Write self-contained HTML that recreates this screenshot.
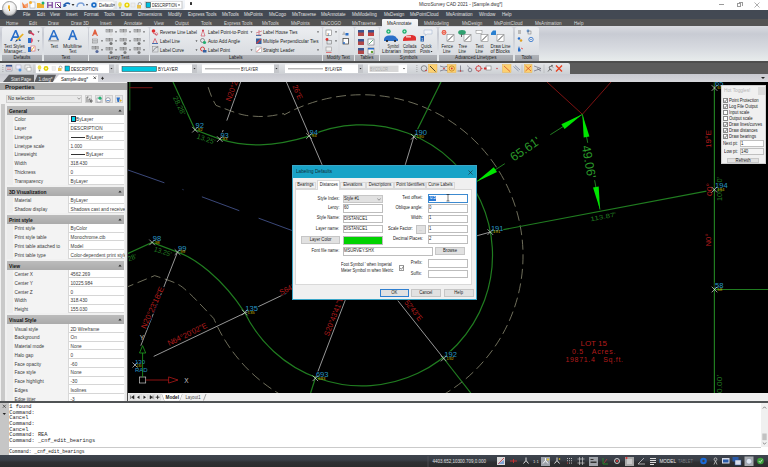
<!DOCTYPE html>
<html><head><meta charset="utf-8">
<style>
*{margin:0;padding:0;box-sizing:border-box}
html,body{width:768px;height:467px;overflow:hidden;background:#fff;font-family:"Liberation Sans",sans-serif;position:relative}
.a{position:absolute}
.t{position:absolute;white-space:nowrap;line-height:1}
#title{left:0;top:0;width:768px;height:10px;background:#fff}
#menu{left:0;top:10px;width:768px;height:8.5px;background:#434953}
#rtabs{left:0;top:18.5px;width:768px;height:7.5px;background:#545454}
#ribbon{left:0;top:26px;width:768px;height:36px;background:linear-gradient(#d9dbe1 0%,#c8cbd3 22%,#d6d9df 60%,#e9eded 100%)}
#dl1{left:0;top:61px;width:768px;height:2px;background:#4e4e4e}
#tb{left:0;top:63px;width:768px;height:11px;background:#5c5c5c}
#tbl{left:0;top:63px;width:570px;height:11px;background:linear-gradient(#e4e6e9,#cdd0d4);border-radius:0 2px 0 0}
#tabs{left:0;top:74px;width:768px;height:8px;background:linear-gradient(#c8c9d0,#d6d7dc)}
#props{left:0;top:82px;width:127px;height:319px;background:#f0f0f0}
#draw{left:128px;top:82px;width:640px;height:311px;background:#000}
#lay{left:128px;top:393px;width:640px;height:8px;background:#f0f0f0}
#dl2{left:0;top:401px;width:768px;height:2px;background:#505355}
#cmd{left:0;top:403px;width:768px;height:52px;background:#fff}
#status{left:0;top:455px;width:768px;height:12px;background:#34373c}
.mn{color:#e0e0e0;font-size:4.6px;top:13px}
.rt{color:#d8d8d8;font-size:4.6px;top:22px}
.grp{position:absolute;top:27px;height:34px;background:linear-gradient(#eceef1,#dcdfe3 70%,#d6d9de);border-radius:2px}
.gl{position:absolute;top:54.5px;height:6.5px;background:linear-gradient(#b0b3b8,#a2a5aa);font-size:4.6px;color:#222;text-align:center;line-height:6.5px}
.rl{font-size:4.6px;color:#222}

</style></head><body>
<div class="a" id="title"></div>
<div class="a" id="menu"></div>
<div class="a" id="rtabs"></div>
<div class="a" id="ribbon"></div>
<div class="a" id="dl1"></div>
<div class="a" id="tb"></div>
<div class="a" id="tbl"></div>
<div class="a" id="tabs"></div>
<div class="a" id="props"></div>
<div class="a" id="draw"></div>
<div class="a" id="lay"></div>
<div class="a" id="dl2"></div>
<div class="a" id="cmd"></div>
<div class="a" id="status"></div>
<div class="a" style="left:20px;top:0;width:165px;height:10px;background:linear-gradient(#f4f7fb,#e6ecf3);border-radius:0 0 4px 0"></div>
<div class="a" style="left:1.6px;top:0.6px;width:15px;height:15px;border-radius:50%;background:radial-gradient(circle at 50% 30%,#ffffff 0%,#f2f2f2 40%,#d0d0d0 75%,#b0b0b0 100%);border:0.8px solid #9c9c9c;z-index:3"></div>
<div class="a" style="left:8px;top:5px;width:2.4px;height:4px;background:#f0b020;border-radius:50% 50% 35% 35%;z-index:4"></div>
<div class="a" style="left:8.7px;top:9px;width:1px;height:1.6px;background:#c08010;z-index:4"></div>
<svg class="a" style="left:20px;top:0" width="170" height="10" viewBox="0 0 170 10">
 <path d="M2 2 L7 8 L3 8 Z" fill="#f08040"/><path d="M4 5 L8 3 L8 8Z" fill="#f8a070"/>
 <rect x="10" y="2" width="5" height="6" fill="#fff" stroke="#999" stroke-width=".5"/><circle cx="10.5" cy="2.5" r="1.5" fill="#f8b030"/>
 <path d="M17 3 L20 3 L21 4 L24 4 L24 8 L17 8Z" fill="#f0b030"/><circle cx="23" cy="3" r="1.5" fill="#20b070"/>
 <rect x="27" y="2" width="6" height="6" fill="#8a5aa8"/><rect x="28.5" y="2.5" width="3" height="2" fill="#fff"/><rect x="28.5" y="6" width="3" height="2" fill="#ddd"/>
 <rect x="35" y="2" width="6" height="6" fill="#a070b8"/><rect x="36" y="3" width="4" height="4" fill="#fff"/><path d="M37 4 L41 8" stroke="#333" stroke-width="1"/>
 <path d="M44 7 Q44 3 48 3 L50 4" stroke="#1f5fb0" stroke-width="1.6" fill="none"/><path d="M43 4 L45 7 L47 5Z" fill="#1f5fb0"/>
 <path d="M52 3.5 L54 5 L52 6.5Z" fill="#333" transform="rotate(90 53 5)"/>
 <path d="M57 7 Q57 3 61 3 Q64 3 64 6" stroke="#7aa0d8" stroke-width="1.4" fill="none"/>
 <path d="M66 4 L68 4 L67 6Z" fill="#333"/>
 <circle cx="74" cy="5" r="2.8" fill="#1f6fc8"/><circle cx="74" cy="5" r="1" fill="#fff"/>
 <rect x="77" y="1" width="17" height="8" fill="#fff" stroke="#ccc" stroke-width=".5"/>
 <text x="79" y="7" font-size="4.6" font-family="Liberation Sans" fill="#222" textLength="14" lengthAdjust="spacingAndGlyphs">Default</text>
 <path d="M93 4.5 L95 4.5 L94 6Z" fill="#222"/>
 <line x1="96" y1="1" x2="96" y2="9" stroke="#bbb" stroke-width=".5"/>
 <ellipse cx="100" cy="4.5" rx="1.8" ry="2.5" fill="#f0e060"/><rect x="99.3" y="7" width="1.4" height="1.5" fill="#999"/>
 <circle cx="107" cy="5" r="2.6" fill="#e8d000"/><circle cx="107" cy="5" r="1.2" fill="#fff8a0"/>
 <rect x="111" y="3" width="4" height="4" fill="#eee" stroke="#ccc" stroke-width=".4"/>
 <rect x="117" y="5" width="4" height="3.5" fill="#e8c050"/><path d="M118 5 Q118 2 120 2.5 Q122 3 121.5 5" stroke="#888" stroke-width=".7" fill="none"/>
 <rect x="125" y="1.5" width="37" height="7" fill="#fff" stroke="#c8c8c8" stroke-width=".5"/>
 <rect x="126" y="2.5" width="4.5" height="5" fill="#00c0e0" stroke="#222" stroke-width=".5"/>
 <text x="132" y="7" font-size="4.6" font-family="Liberation Sans" fill="#222" textLength="25" lengthAdjust="spacingAndGlyphs">DESCRIPTION</text>
 <path d="M158 4.5 L160 4.5 L159 6Z" fill="#222"/>
 <line x1="162" y1="1" x2="162" y2="9" stroke="#bbb" stroke-width=".5"/>
</svg>
<div class="a" style="left:189.5px;top:2.2px;width:2px;height:3px;background:#333;border-radius:0.5px"></div>
<div class="t" style="left:419px;top:2.5px;font-size:4.7px;color:#333">MicroSurvey CAD 2021 - [Sample.dwg*]</div>
<div class="a" style="left:719px;top:4px;width:5px;height:1px;background:#9a9a9a"></div>
<div class="a" style="left:737px;top:2.5px;width:4px;height:4px;border:0.8px solid #9a9a9a;background:#fff"></div>
<div class="a" style="left:738.5px;top:1.5px;width:4px;height:4px;border-top:0.8px solid #9a9a9a;border-right:0.8px solid #9a9a9a"></div>
<svg class="a" style="left:754px;top:1.5px" width="6" height="6"><path d="M.5 .5 L5.5 5.5 M5.5 .5 L.5 5.5" stroke="#9a9a9a" stroke-width=".8"/></svg>
<div class="t mn" style="left:23px">File</div>
<div class="t mn" style="left:37px">Edit</div>
<div class="t mn" style="left:50px">View</div>
<div class="t mn" style="left:66px">Insert</div>
<div class="t mn" style="left:84px">Format</div>
<div class="t mn" style="left:104px">Tools</div>
<div class="t mn" style="left:121px">Draw</div>
<div class="t mn" style="left:138px">Dimensions</div>
<div class="t mn" style="left:168px">Modify</div>
<div class="t mn" style="left:188px">Express Tools</div>
<div class="t mn" style="left:222px">MsTools</div>
<div class="t mn" style="left:244px">MsPoints</div>
<div class="t mn" style="left:269px">MsCogo</div>
<div class="t mn" style="left:292px">MsTraverse</div>
<div class="t mn" style="left:321px">MsAnnotate</div>
<div class="t mn" style="left:352px">MsModeling</div>
<div class="t mn" style="left:384px">MsDesign</div>
<div class="t mn" style="left:410px">MsPointCloud</div>
<div class="t mn" style="left:446px">MsAnimation</div>
<div class="t mn" style="left:479px">Window</div>
<div class="t mn" style="left:502px">Help</div>
<div class="a" style="left:382px;top:19px;width:36px;height:8px;background:linear-gradient(#f6f7f8,#eceef0);border-radius:1px 1px 0 0"></div>
<div class="t rt" style="left:387px;color:#222">MsAnnotate</div>
<div class="t rt" style="left:6px">Home</div>
<div class="t rt" style="left:29px">Edit</div>
<div class="t rt" style="left:48px">Draw</div>
<div class="t rt" style="left:71px">Draw 3D</div>
<div class="t rt" style="left:100px">Insert</div>
<div class="t rt" style="left:124px">Annotate</div>
<div class="t rt" style="left:154px">View</div>
<div class="t rt" style="left:175px">Output</div>
<div class="t rt" style="left:201px">Tools</div>
<div class="t rt" style="left:224px">Express Tools</div>
<div class="t rt" style="left:262px">MsTools</div>
<div class="t rt" style="left:291px">MsPoints</div>
<div class="t rt" style="left:321px">MsCOGO</div>
<div class="t rt" style="left:352px">MsTraverse</div>
<div class="t rt" style="left:424px">MsModeling</div>
<div class="t rt" style="left:462px">MsDesign</div>
<div class="t rt" style="left:494px">MsPointCloud</div>
<div class="t rt" style="left:535px">MsAnimation</div>
<div class="t rt" style="left:574px">Help</div>
<div class="grp" style="left:2px;width:40px"></div>
<div class="gl" style="left:2px;width:40px">Defaults</div>
<div class="grp" style="left:44px;width:43.5px"></div>
<div class="gl" style="left:44px;width:43.5px">Text</div>
<div class="grp" style="left:89px;width:59.5px"></div>
<div class="gl" style="left:89px;width:59.5px">Leroy Text</div>
<div class="grp" style="left:150px;width:171.5px"></div>
<div class="gl" style="left:150px;width:171.5px">Labels</div>
<div class="grp" style="left:323px;width:30.5px"></div>
<div class="gl" style="left:323px;width:30.5px">Modify Text</div>
<div class="grp" style="left:355px;width:23.600000000000023px"></div>
<div class="gl" style="left:355px;width:23.600000000000023px">Tables</div>
<div class="grp" style="left:380px;width:57.30000000000001px"></div>
<div class="gl" style="left:380px;width:57.30000000000001px">Symbols</div>
<div class="grp" style="left:438.5px;width:74.5px"></div>
<div class="gl" style="left:438.5px;width:74.5px">Advanced Linetypes</div>
<div class="grp" style="left:515px;width:23.5px"></div>
<div class="gl" style="left:515px;width:23.5px">Tools</div>
<svg class="a" style="left:0;top:26px" width="540" height="36" viewBox="0 26 540 36" font-family="Liberation Sans" font-size="4.6" fill="#222">
<path d="M10 41 L15 30 L16.5 30 L21 41 L19 41 L17.8 38 L13.2 38 L12 41Z M13.8 36.3 L17.2 36.3 L15.6 32.3Z" fill="#2a6fc9"/>
<path d="M16.5 39.5 L22.5 33.5 L23.8 34.6 L17.8 40.6Z" fill="#e8b020"/><path d="M16.5 39.5 L17.8 40.6 L15 42.3Z" fill="#1f3f78"/>
<text x="4" y="48" textLength="21" lengthAdjust="spacingAndGlyphs">Text Styles</text>
<text x="4" y="53" textLength="22" lengthAdjust="spacingAndGlyphs">Manager...</text>
<circle cx="30" cy="32" r="2" fill="#666"/><path d="M30 32 L34 35" stroke="#d04060" stroke-width="1.6"/>
<rect x="28" y="38" width="3" height="5" fill="#2a6fc9"/><path d="M31 37.5 Q35 40 31 43.5Z" fill="#e05070"/>
<rect x="28" y="47" width="3" height="5" fill="#2a6fc9"/><rect x="31" y="46" width="4" height="5" fill="#fff" stroke="#d04040" stroke-width=".5"/><path d="M31 51 L34 47" stroke="#e0a020" stroke-width=".8"/>
<path d="M37.5 31.4 L39.5 31.4 L38.5 32.8Z" fill="#222"/>
<path d="M37.5 40.4 L39.5 40.4 L38.5 41.8Z" fill="#222"/>
<path d="M37.5 49.4 L39.5 49.4 L38.5 50.8Z" fill="#222"/>
<path d="M48.5 40 L53 30 L54.5 30 L59 40 L57 40 L56 37.3 L51.5 37.3 L50.5 40Z M52.2 35.6 L55.3 35.6 L53.8 31.8Z" fill="#2a6fc9"/><rect x="48" y="40.6" width="11" height=".6" fill="#555"/>
<path d="M68 40 L72 30 L73.5 30 L77.5 40 L75.5 40 L74.6 37.3 L70.9 37.3 L70 40Z M71.5 35.6 L74 35.6 L72.8 31.8Z" fill="#2a6fc9"/>
<text x="50.5" y="48" textLength="7.5" lengthAdjust="spacingAndGlyphs">Text</text>
<text x="63" y="48" textLength="19" lengthAdjust="spacingAndGlyphs">Multiline</text>
<text x="69" y="53" textLength="7.5" lengthAdjust="spacingAndGlyphs">Text</text>
<path d="M92 36 L94.5 29.5 L95.5 29.5 L98 36 L96.8 36 L96.2 34.5 L93.8 34.5 L93.2 36Z" fill="#e06040"/>
<g fill="none" stroke="#777" stroke-width=".5"><rect x="92.5" y="39" width="5" height="4"/></g><path d="M93 40.5h4M93 41.8h4" stroke="#777" stroke-width=".4"/>
<g fill="none" stroke="#777" stroke-width=".5"><rect x="92" y="46.5" width="3.5" height="2.5"/><rect x="95.5" y="46.5" width="3" height="2.5"/></g><path d="M92.5 47.3 h2.5 M92.5 48.1 h2.5 M96 47.3 h2 M96 48.1 h2" stroke="#666" stroke-width=".4"/><circle cx="97" cy="51.5" r="1.6" fill="#334a8a" opacity=".8"/>
<g fill="none" stroke="#777" stroke-width=".5"><rect x="106" y="29.5" width="3.5" height="2.5"/><rect x="109.5" y="29.5" width="3" height="2.5"/></g><path d="M106.5 30.3 h2.5 M106.5 31.1 h2.5 M110 30.3 h2 M110 31.1 h2" stroke="#666" stroke-width=".4"/><circle cx="111" cy="34.5" r="1.6" fill="#ddd" opacity=".8"/>
<g fill="none" stroke="#777" stroke-width=".5"><rect x="106" y="38.5" width="3.5" height="2.5"/><rect x="109.5" y="38.5" width="3" height="2.5"/></g><path d="M106.5 39.3 h2.5 M106.5 40.1 h2.5 M110 39.3 h2 M110 40.1 h2" stroke="#666" stroke-width=".4"/><circle cx="111" cy="43.5" r="1.6" fill="#555" opacity=".8"/>
<g fill="none" stroke="#777" stroke-width=".5"><rect x="106" y="47.5" width="3.5" height="2.5"/><rect x="109.5" y="47.5" width="3" height="2.5"/></g><path d="M106.5 48.3 h2.5 M106.5 49.1 h2.5 M110 48.3 h2 M110 49.1 h2" stroke="#666" stroke-width=".4"/><circle cx="111" cy="52.5" r="1.6" fill="#666" opacity=".8"/>
<g fill="none" stroke="#777" stroke-width=".5"><rect x="120" y="29.5" width="3.5" height="2.5"/><rect x="123.5" y="29.5" width="3" height="2.5"/></g><path d="M120.5 30.3 h2.5 M120.5 31.1 h2.5 M124 30.3 h2 M124 31.1 h2" stroke="#666" stroke-width=".4"/><circle cx="125" cy="34.5" r="1.6" fill="#ddd" opacity=".8"/>
<g fill="none" stroke="#777" stroke-width=".5"><rect x="120" y="38.5" width="3.5" height="2.5"/><rect x="123.5" y="38.5" width="3" height="2.5"/></g><path d="M120.5 39.3 h2.5 M120.5 40.1 h2.5 M124 39.3 h2 M124 40.1 h2" stroke="#666" stroke-width=".4"/><circle cx="125" cy="43.5" r="1.6" fill="#555" opacity=".8"/>
<g fill="none" stroke="#777" stroke-width=".5"><rect x="120" y="47.5" width="3.5" height="2.5"/><rect x="123.5" y="47.5" width="3" height="2.5"/></g><path d="M120.5 48.3 h2.5 M120.5 49.1 h2.5 M124 48.3 h2 M124 49.1 h2" stroke="#666" stroke-width=".4"/><circle cx="125" cy="52.5" r="1.6" fill="#666" opacity=".8"/>
<g fill="none" stroke="#777" stroke-width=".5"><rect x="134" y="29.5" width="3.5" height="2.5"/><rect x="137.5" y="29.5" width="3" height="2.5"/></g><path d="M134.5 30.3 h2.5 M134.5 31.1 h2.5 M138 30.3 h2 M138 31.1 h2" stroke="#666" stroke-width=".4"/><circle cx="139" cy="34.5" r="1.6" fill="#ddd" opacity=".8"/>
<g fill="none" stroke="#777" stroke-width=".5"><rect x="134" y="38.5" width="3.5" height="2.5"/><rect x="137.5" y="38.5" width="3" height="2.5"/></g><path d="M134.5 39.3 h2.5 M134.5 40.1 h2.5 M138 39.3 h2 M138 40.1 h2" stroke="#666" stroke-width=".4"/><circle cx="139" cy="43.5" r="1.6" fill="#555" opacity=".8"/>
<g fill="none" stroke="#777" stroke-width=".5"><rect x="134" y="47.5" width="3.5" height="2.5"/><rect x="137.5" y="47.5" width="3" height="2.5"/></g><path d="M134.5 48.3 h2.5 M134.5 49.1 h2.5 M138 48.3 h2 M138 49.1 h2" stroke="#666" stroke-width=".4"/><circle cx="139" cy="52.5" r="1.6" fill="#666" opacity=".8"/>
<path d="M115 31.4 L117 31.4 L116 32.8Z" fill="#222"/>
<path d="M115 40.4 L117 40.4 L116 41.8Z" fill="#222"/>
<path d="M115 49.4 L117 49.4 L116 50.8Z" fill="#222"/>
<path d="M129 31.4 L131 31.4 L130 32.8Z" fill="#222"/>
<path d="M129 40.4 L131 40.4 L130 41.8Z" fill="#222"/>
<path d="M129 49.4 L131 49.4 L130 50.8Z" fill="#222"/>
<path d="M143 31.4 L145 31.4 L144 32.8Z" fill="#222"/>
<path d="M143 40.4 L145 40.4 L144 41.8Z" fill="#222"/>
<path d="M143 49.4 L145 49.4 L144 50.8Z" fill="#222"/>
<path d="M101 40.4 L103 40.4 L102 41.8Z" fill="#222"/>
<path d="M101 49.4 L103 49.4 L102 50.8Z" fill="#222"/>
<circle cx="153.5" cy="31" r="1.8" fill="#e03030"/><path d="M153 33 L157 35" stroke="#d04050" stroke-width=".8"/><circle cx="156.5" cy="34" r="1.3" fill="none" stroke="#d04050" stroke-width=".5"/>
<path d="M153 43 L155 38.5 L157 43" fill="none" stroke="#d04050" stroke-width=".7"/><path d="M152 43.5 h6" stroke="#2050a0" stroke-width=".8"/>
<rect x="152.5" y="46.5" width="5.5" height="5.5" fill="none" stroke="#888" stroke-width=".5"/><path d="M153 51 Q155 47 158 47" stroke="#444" stroke-width=".5" fill="none"/>
<text x="160" y="34" textLength="37" lengthAdjust="spacingAndGlyphs">Reverse Line Label</text>
<text x="160" y="43" textLength="20" lengthAdjust="spacingAndGlyphs">Label Line</text>
<text x="160" y="52" textLength="24" lengthAdjust="spacingAndGlyphs">Label Curve</text>
<path d="M195.5 40.4 L197.5 40.4 L196.5 41.8Z" fill="#222"/>
<path d="M195.5 49.4 L197.5 49.4 L196.5 50.8Z" fill="#222"/>
<path d="M201 36 L203 30 L205 36Z" fill="none" stroke="#d04050" stroke-width=".6"/><circle cx="203" cy="30.5" r="1" fill="#d04050"/>
<circle cx="202.5" cy="40.5" r="2" fill="none" stroke="#555" stroke-width=".6"/><circle cx="204.5" cy="42.5" r="1.6" fill="#20b070"/>
<circle cx="202.5" cy="49" r="2" fill="none" stroke="#d03030" stroke-width=".9"/><rect x="203" y="50" width="3.5" height="2.5" fill="#3060a0"/>
<text x="208" y="34" textLength="40" lengthAdjust="spacingAndGlyphs">Label Point-to-Point</text>
<text x="208" y="43" textLength="32" lengthAdjust="spacingAndGlyphs">Auto Add Angle</text>
<text x="208" y="52" textLength="22" lengthAdjust="spacingAndGlyphs">Label Point</text>
<path d="M250.5 31.4 L252.5 31.4 L251.5 32.8Z" fill="#222"/>
<path d="M250.5 49.4 L252.5 49.4 L251.5 50.8Z" fill="#222"/>
<path d="M256 35 h6 M259 30 v5 M256 33 L262 31" stroke="#c03040" stroke-width=".5"/><path d="M256 35.5h5" stroke="#3060a0" stroke-width=".8"/>
<rect x="256" y="38.5" width="5.5" height="5.5" fill="#3060a0"/><path d="M256.5 43.5 L261 39" stroke="#d04040" stroke-width="1.2"/>
<rect x="256" y="47" width="5.5" height="5.5" fill="#fff" stroke="#888" stroke-width=".4"/><path d="M256.5 52 L261 47.5" stroke="#d04040" stroke-width=".7"/>
<text x="263" y="34" textLength="34.5" lengthAdjust="spacingAndGlyphs">Label House Ties</text>
<text x="263" y="43" textLength="55.5" lengthAdjust="spacingAndGlyphs">Multiple Perpendicular Ties</text>
<text x="263" y="52" textLength="31.5" lengthAdjust="spacingAndGlyphs">Straight Leader</text>
<path d="M317 31.4 L319 31.4 L318 32.8Z" fill="#222"/>
<path d="M317 49.4 L319 49.4 L318 50.8Z" fill="#222"/>
<rect x="326" y="30" width="5.5" height="5.5" fill="#fff" stroke="#666" stroke-width=".5"/><text x="327.5" y="35" font-size="3">y</text>
<circle cx="327" cy="39.5" r="1.4" fill="#e03030"/><rect x="327" y="40.5" width="4.5" height="3.5" fill="none" stroke="#666" stroke-width=".5"/>
<rect x="326" y="47" width="5.5" height="4" fill="#eee" stroke="#888" stroke-width=".5"/><path d="M326 52.5h5.5" stroke="#e03030" stroke-width=".6"/>
<path d="M335 31.4 L337 31.4 L336 32.8Z" fill="#222"/>
<path d="M335 40.4 L337 40.4 L336 41.8Z" fill="#222"/>
<path d="M342 35 L344 31 L346 35Z" fill="#bbb"/><path d="M345.5 33 h3 v2.5 h-3z" fill="#2a6fc9"/>
<rect x="343" y="38.5" width="5.5" height="5.5" fill="#fff" stroke="#333" stroke-width=".7"/><circle cx="344" cy="43" r="1" fill="#2a6fc9"/>
<line x1="339" y1="29" x2="339" y2="54" stroke="#d0d2d5" stroke-width=".5"/>
<rect x="358" y="30" width="6" height="6" fill="#3a5590"/><rect x="358" y="32.5" width="6" height="3.5" fill="#b04848"/>
<rect x="358" y="39" width="6" height="6" fill="#3a5590"/><rect x="358" y="41.5" width="6" height="3.5" fill="#b04848"/>
<rect x="358" y="48" width="6" height="6" fill="#3a5590"/><rect x="358" y="50.5" width="6" height="3.5" fill="#b04848"/>
<rect x="368" y="30" width="6" height="6" fill="#3a5590"/><rect x="368" y="32.5" width="6" height="3.5" fill="#c04040"/>
<rect x="368" y="39" width="6" height="6" fill="#3a5590"/><rect x="368" y="41.5" width="6" height="3.5" fill="#b04848"/>
<rect x="368" y="48" width="6" height="6" fill="#3a5590"/><rect x="368" y="50.5" width="6" height="3.5" fill="#b04848"/>
<rect x="368" y="39" width="6" height="6" fill="#fff" stroke="#556" stroke-width=".5"/><path d="M369 44 L373 40" stroke="#2a8a50" stroke-width=".7"/>
<rect x="368" y="48" width="6" height="6" fill="#fff" stroke="#556" stroke-width=".5"/><rect x="368" y="48" width="6" height="1.5" fill="#2a6fc9"/><circle cx="372" cy="52" r="1.3" fill="#60a030"/>
<circle cx="388.5" cy="31.5" r="2.2" fill="#20b070"/><path d="M387.5 31.5h2M388.5 30.5v2" stroke="#fff" stroke-width=".5"/>
<path d="M384 39 Q385 35.5 389 35.5 L393 35.5 Q396 36 397 38.5 L398 39 L398 41 L384 41Z" fill="#2a6fc9"/><circle cx="387" cy="41" r="1.1" fill="#222"/><circle cx="395" cy="41" r="1.1" fill="#222"/>
<text x="387.5" y="48" textLength="11.5" lengthAdjust="spacingAndGlyphs">Symbol</text>
<text x="382" y="53" textLength="19" lengthAdjust="spacingAndGlyphs">Librarian</text>
<circle cx="404.5" cy="31.5" r="2.2" fill="#20b070"/><path d="M403.5 31.5h2M404.5 30.5v2" stroke="#fff" stroke-width=".5"/>
<path d="M403 40 Q403 36.5 407 35.5 L412 35 Q416 35.5 416 38 L416 40.5 L403 41Z" fill="#e03030"/><rect x="406" y="36" width="5" height="1.6" fill="#fff" opacity=".7"/>
<text x="403" y="48" textLength="13.5" lengthAdjust="spacingAndGlyphs">Collada</text>
<text x="403.5" y="53" textLength="12" lengthAdjust="spacingAndGlyphs">Import</text>
<rect x="420.5" y="36" width="3.5" height="5.5" fill="#1f5fb0"/><text x="421.3" y="40.5" font-size="3.5" fill="#fff">1</text>
<path d="M424 30 h8 v4 h-5 l-1.5 1.5 v-1.5 h-1.5z" fill="#f2f4f8" stroke="#8aa0c0" stroke-width=".4"/>
<text x="421" y="48" textLength="10.5" lengthAdjust="spacingAndGlyphs">Quick</text>
<text x="420" y="53" textLength="10" lengthAdjust="spacingAndGlyphs">Posts</text>
<path d="M430.5 50.9 L432.5 50.9 L431.5 52.3Z" fill="#222"/>
<circle cx="444" cy="32.5" r="2.4" fill="#e8503a"/><path d="M443 31.5 h2 v2 h-2z" fill="none" stroke="#fff" stroke-width=".4"/><rect x="447" y="34.5" width="7" height="7" fill="#fff" stroke="#555" stroke-width=".4"/><path d="M447.8 40.7 L453.2 35.3" stroke="#222" stroke-width=".8"/>
<ellipse cx="462" cy="32.5" rx="3.8" ry="2.4" fill="#30a070"/><rect x="461" y="34" width="1" height="3" fill="#666"/><rect x="464" y="34.5" width="7" height="7" fill="#fff" stroke="#555" stroke-width=".4"/><path d="M464.8 40.7 L470.2 35.3" stroke="#222" stroke-width=".8"/>
<rect x="476" y="30.5" width="6" height="3" fill="#fff" stroke="#666" stroke-width=".4"/><rect x="481" y="34.5" width="7" height="7" fill="#fff" stroke="#555" stroke-width=".4"/><path d="M481.8 40.7 L487.2 35.3" stroke="#222" stroke-width=".8"/>
<path d="M491 33 L493 30.5 L496 30.5 L496 35 L491 35Z" fill="#2a80d0"/><rect x="497" y="34.5" width="7" height="7" fill="#fff" stroke="#555" stroke-width=".4"/><path d="M497.8 40.7 L503.2 35.3" stroke="#222" stroke-width=".8"/>
<text x="441.5" y="48" textLength="11.5" lengthAdjust="spacingAndGlyphs">Fence</text>
<text x="443" y="53" textLength="7.5" lengthAdjust="spacingAndGlyphs">Line</text>
<text x="458.5" y="48" textLength="8.5" lengthAdjust="spacingAndGlyphs">Tree</text>
<text x="458.5" y="53" textLength="7.5" lengthAdjust="spacingAndGlyphs">Line</text>
<text x="475.5" y="48" textLength="8" lengthAdjust="spacingAndGlyphs">Text</text>
<text x="475.5" y="53" textLength="7.5" lengthAdjust="spacingAndGlyphs">Line</text>
<text x="490.5" y="48" textLength="20" lengthAdjust="spacingAndGlyphs">Draw Line</text>
<text x="490.5" y="53" textLength="19.5" lengthAdjust="spacingAndGlyphs">of Blocks</text>
<rect x="518" y="30" width="3" height="4" fill="#bbb"/><circle cx="528" cy="31" r="1.4" fill="#6a9ad0"/><rect x="528" y="31" width="3" height="3" fill="none" stroke="#555" stroke-width=".4"/>
<circle cx="519" cy="38.5" r="1.3" fill="#2a6fc9"/><circle cx="521" cy="40.5" r="1.3" fill="#e0a020"/><circle cx="531" cy="39.5" r="2.2" fill="none" stroke="#2a6fc9" stroke-width=".8"/><path d="M530 39.5h2" stroke="#2a6fc9" stroke-width=".6"/>
<path d="M518 49 L519 46 L520 49Z" fill="#2a6fc9"/><rect x="518" y="49" width="2.5" height="2.5" fill="#2a6fc9"/><path d="M521 48 L523 49" stroke="#e04040" stroke-width=".8"/>
</svg>
<svg class="a" style="left:0;top:63px" width="570" height="19" viewBox="0 63 570 19" font-family="Liberation Sans" font-size="4.6" fill="#222">
<rect x="2.5" y="65" width=".8" height=".8" fill="#888"/>
<rect x="2.5" y="67" width=".8" height=".8" fill="#888"/>
<rect x="2.5" y="69" width=".8" height=".8" fill="#888"/>
<rect x="2.5" y="71" width=".8" height=".8" fill="#888"/>
<rect x="6" y="65" width="6" height="6" fill="#e8e8f0" stroke="#667" stroke-width=".4"/><rect x="6" y="65" width="6" height="1.6" fill="#3a5590"/><path d="M7 68h4M7 69.5h4" stroke="#c04040" stroke-width=".5"/>
<rect x="16" y="65" width="5" height="4" fill="#eef" stroke="#99a" stroke-width=".4"/><circle cx="20" cy="70" r="1.5" fill="#4a90e0"/>
<rect x="25" y="65" width="5" height="4" fill="#eee" stroke="#888" stroke-width=".4"/><rect x="27" y="67.5" width="4" height="3.5" fill="#fff" stroke="#888" stroke-width=".4"/>
<line x1="34" y1="64.5" x2="34" y2="73" stroke="#aaa" stroke-width=".5"/>
<rect x="36" y="64.5" width="73" height="8.5" fill="#fff"/><rect x="109" y="64.5" width="5" height="8.5" fill="#c4c6ca"/><path d="M110.5 67.9 L112.5 67.9 L111.5 69.3Z" fill="#222"/>
<ellipse cx="39.5" cy="67.5" rx="1.8" ry="2.3" fill="#f0e050"/><rect x="38.8" y="69.8" width="1.4" height="1.5" fill="#888"/>
<circle cx="46" cy="68.5" r="2.4" fill="#e0d000"/><circle cx="46" cy="68.5" r="1" fill="#fff9b0"/>
<rect x="52" y="66.5" width="3.5" height="4" fill="#eee" stroke="#ddd" stroke-width=".4"/>
<rect x="58" y="68" width="3.5" height="3" fill="#e8c050"/><path d="M59 68 Q59 65.5 61 66 Q62.5 66.5 62 68.5" stroke="#888" stroke-width=".6" fill="none"/>
<rect x="65" y="66" width="4.5" height="5" fill="#00c0e0" stroke="#333" stroke-width=".5"/>
<text x="71" y="70.6" textLength="27" lengthAdjust="spacingAndGlyphs">DESCRIPTION</text>
<line x1="117" y1="64.5" x2="117" y2="73" stroke="#bbb" stroke-width=".5"/>
<rect x="119" y="64.5" width="73" height="8.5" fill="#fff"/><rect x="192" y="64.5" width="5" height="8.5" fill="#c4c6ca"/><path d="M193.5 67.9 L195.5 67.9 L194.5 69.3Z" fill="#222"/>
<rect x="122" y="66.5" width="34.5" height="5" fill="#00c8e0" stroke="#2a3a40" stroke-width=".5"/>
<text x="158" y="70.6" textLength="20" lengthAdjust="spacingAndGlyphs">BYLAYER</text>
<rect x="202" y="64.5" width="72" height="8.5" fill="#fff"/><rect x="274" y="64.5" width="5" height="8.5" fill="#c4c6ca"/><path d="M275.5 67.9 L277.5 67.9 L276.5 69.3Z" fill="#222"/>
<line x1="205" y1="68.8" x2="240" y2="68.8" stroke="#333" stroke-width=".5"/><text x="241" y="70.6" textLength="17" lengthAdjust="spacingAndGlyphs">BYLAYER</text>
<rect x="285" y="64.5" width="73" height="8.5" fill="#fff"/><rect x="358" y="64.5" width="5" height="8.5" fill="#c4c6ca"/><path d="M359.5 67.9 L361.5 67.9 L360.5 69.3Z" fill="#222"/>
<line x1="288" y1="68.8" x2="323" y2="68.8" stroke="#333" stroke-width=".5"/><text x="325" y="70.6" textLength="17" lengthAdjust="spacingAndGlyphs">BYLAYER</text>
<rect x="368" y="64.5" width="39" height="8.5" fill="#fff"/><rect x="369.5" y="65.5" width="29" height="6.5" fill="#d8d8d8"/><text x="370" y="70.6" fill="#aaa" textLength="18" lengthAdjust="spacingAndGlyphs">BYCOLOR</text><path d="M403 67.9 L405 67.9 L404 69.3Z" fill="#222"/>
<rect x="416.5" y="65" width=".8" height=".8" fill="#888"/>
<rect x="416.5" y="67" width=".8" height=".8" fill="#888"/>
<rect x="416.5" y="69" width=".8" height=".8" fill="#888"/>
<rect x="416.5" y="71" width=".8" height=".8" fill="#888"/>
<circle cx="424" cy="68.5" r="2.8" fill="none" stroke="#555" stroke-width=".6"/><circle cx="426" cy="70.5" r=".8" fill="#d03030"/>
<rect x="428.5" y="64.5" width="8.5" height="8" fill="#fcd070" stroke="#e8b040" stroke-width=".4"/>
<path d="M430 66 L435.5 71.5" stroke="#222" stroke-width=".8"/>
<path d="M440 66 Q444 68.5 448 66 M440 71 Q444 68.5 448 71" stroke="#556" stroke-width=".6" fill="none"/><circle cx="444" cy="68.5" r=".8" fill="#d03030"/>
<rect x="447.5" y="64.5" width="8.5" height="8" fill="#fcd070" stroke="#e8b040" stroke-width=".4"/>
<circle cx="451.8" cy="68.5" r="2.6" fill="none" stroke="#c08020" stroke-width=".8"/><circle cx="451.8" cy="68.5" r=".9" fill="#d03030"/>
<path d="M460.5 65.5 V71 M457.5 71 H463.5" stroke="#556" stroke-width=".6"/><circle cx="460.5" cy="71" r=".7" fill="#d03030"/>
<circle cx="470" cy="70" r="1.8" fill="none" stroke="#556" stroke-width=".6"/><path d="M467 65.5 L470 68.2" stroke="#556" stroke-width=".5"/>
<circle cx="478.5" cy="68.5" r="2.6" fill="none" stroke="#d03030" stroke-width=".8"/><path d="M475 68.5h1.5M480.5 68.5h2M478.5 65v1.3M478.5 70.7v1.3" stroke="#d03030" stroke-width=".6"/>
<rect x="486" y="66" width="5" height="4" fill="#fff" stroke="#666" stroke-width=".5"/><rect x="484" y="67.5" width="2.5" height="2" fill="#d03030"/>
<circle cx="497" cy="68.5" r=".7" fill="#d03030"/>
<rect x="502.5" y="64.5" width="8.5" height="8" fill="#fcd070" stroke="#e8b040" stroke-width=".4"/>
<path d="M504 66 L510 71.5" stroke="#d04020" stroke-width=".7"/>
<path d="M513.5 66.5 L518.5 71 M515 65.5 L520 70" stroke="#7080a0" stroke-width=".7"/>
<line x1="522" y1="64.5" x2="522" y2="73" stroke="#aaa" stroke-width=".5"/>
<rect x="524.5" y="64.5" width="7.5" height="8" fill="#fcd070" stroke="#e8b040" stroke-width=".4"/>
<path d="M525.5 66 L531 71 M525.5 71 L531 66" stroke="#d04020" stroke-width=".7"/>
<path d="M534 66 L541 68.5 L534 71 M537 68.5 L541 71" stroke="#556" stroke-width=".6" fill="none"/>
<line x1="544" y1="64.5" x2="544" y2="73" stroke="#aaa" stroke-width=".5"/>
<path d="M548 71.5 L550 69 L549 67 L551.5 66 L553 67.5 M549.5 69 L552 70.5" stroke="#444" stroke-width=".7" fill="none"/><circle cx="552" cy="65.5" r=".7" fill="#444"/>
<path d="M556 65.5 L562 71.5 M562 65.5 L556 71.5" stroke="#e84020" stroke-width="1.4"/>
<path d="M3 82 L9 74.8 L34 74.8 L34 82Z" fill="#5a5b5e"/><text x="11" y="80.6" fill="#e8e8e8" textLength="20" lengthAdjust="spacingAndGlyphs">Start Page</text>
<path d="M34.5 82 L37.5 74.8 L56 74.8 L53 82Z" fill="#5a5b5e"/><text x="38.5" y="80.6" fill="#e8e8e8" textLength="14" lengthAdjust="spacingAndGlyphs">1.dwg*</text>
<path d="M53 82 L59 74.8 L98 74.8 L98 82Z" fill="#fff"/><text x="61" y="80.6" fill="#111" textLength="27" lengthAdjust="spacingAndGlyphs">Sample.dwg*</text>
<path d="M93.5 76.5 L96 79 M96 76.5 L93.5 79" stroke="#222" stroke-width=".7"/>
<path d="M101 78.3h3 M102.5 76.8v3" stroke="#222" stroke-width=".8"/>
</svg>
<div class="a" style="left:761px;top:77px;width:0;height:0;border-left:2px solid transparent;border-right:2px solid transparent;border-top:2.5px solid #222"></div>
<div class="a" style="left:0;top:82px;width:127px;height:319px;overflow:hidden">
<div class="a" style="left:0;top:0.7px;width:126.5px;height:7.5px;background:#a7a7a7"></div>
<div class="t" style="left:5px;top:2px;font-size:6.2px;font-weight:bold;color:#1a1a1a;letter-spacing:-0.1px">Properties</div>
<div class="a" style="left:1px;top:22px;width:3.5px;height:300px;background:#c9c9c9"></div>
<div class="a" style="left:6px;top:12.6px;width:75.5px;height:8.4px;background:#e9e9e9;border:0.5px solid #cfcfcf"></div>
<div class="t" style="left:8px;top:15px;font-size:4.8px;color:#222">No selection</div>
<svg class="a" style="left:77px;top:15px" width="4" height="3"><path d="M.5 .8 L2 2.2 L3.5 .8" stroke="#444" stroke-width=".5" fill="none"/></svg>
<div class="a" style="left:84.5px;top:12.6px;width:7.5px;height:8.4px;background:#e6e6e6;border:0.5px solid #cfcfcf"></div>
<div class="a" style="left:95px;top:12.6px;width:7.5px;height:8.4px;background:#e6e6e6;border:0.5px solid #cfcfcf"></div>
<div class="a" style="left:105px;top:12.6px;width:7.5px;height:8.4px;background:#e6e6e6;border:0.5px solid #cfcfcf"></div>
<div class="a" style="left:115px;top:12.6px;width:7.5px;height:8.4px;background:#e6e6e6;border:0.5px solid #cfcfcf"></div>
<svg class="a" style="left:84.5px;top:12.6px" width="40" height="9"><path d="M2 2 V7 M2 2 H3.5 M4 4 V7 M4 4 H5.5 M5.5 5 h1.5 v2 h-1.5z" stroke="#333" stroke-width=".6" fill="none"/><rect x="12" y="3" width="4" height="4" fill="#fff" stroke="#556" stroke-width=".4"/><circle cx="15" cy="3.2" r="1.6" fill="#20b070"/><circle cx="23" cy="5" r="2.3" fill="#fff" stroke="#556" stroke-width=".5"/><path d="M21.5 5.5 h3" stroke="#2a6fc9" stroke-width=".7"/><path d="M31.5 2.5 L35 2.5 L34 7 L32.5 7Z" fill="#2a6fc9"/><path d="M34.5 4 L37 5.5 L35 7Z" fill="#e8b020"/></svg>
<div class="a" style="left:6.5px;top:24.00px;width:117.7px;height:8.75px;background:linear-gradient(#bcbcbc,#aaaaaa)"></div>
<div class="t" style="left:9px;top:28.20px;font-size:4.9px;font-weight:bold;color:#111">General</div>
<svg class="a" style="left:117.5px;top:27.00px" width="4" height="3"><path d="M.4 2.4 L2 .5 L3.6 2.4Z" fill="#222"/></svg>
<div class="a" style="left:12.5px;top:32.75px;width:111.7px;height:8.75px;background:#fff;border-bottom:0.8px solid #d6d6d6;border-left:0.8px solid #d0d0d0"></div>
<div class="a" style="left:13px;top:32.75px;width:56px;height:8.75px;background:#f3f3f3;border-right:0.8px solid #d8d8d8"></div>
<div class="t" style="left:14.5px;top:36.35px;font-size:4.7px;color:#3a3a3a">Color</div>
<div class="a" style="left:70.5px;top:34.35px;width:5px;height:5.5px;background:#00d8f0;border:0.5px solid #223"></div>
<div class="t" style="left:76px;top:36.35px;font-size:4.7px;color:#3a3a3a">ByLayer</div>
<div class="a" style="left:12.5px;top:41.50px;width:111.7px;height:8.75px;background:#fff;border-bottom:0.8px solid #d6d6d6;border-left:0.8px solid #d0d0d0"></div>
<div class="a" style="left:13px;top:41.50px;width:56px;height:8.75px;background:#f3f3f3;border-right:0.8px solid #d8d8d8"></div>
<div class="t" style="left:14.5px;top:45.10px;font-size:4.7px;color:#3a3a3a">Layer</div>
<div class="t" style="left:70.5px;top:45.10px;font-size:4.7px;color:#3a3a3a">DESCRIPTION</div>
<div class="a" style="left:12.5px;top:50.25px;width:111.7px;height:8.75px;background:#fff;border-bottom:0.8px solid #d6d6d6;border-left:0.8px solid #d0d0d0"></div>
<div class="a" style="left:13px;top:50.25px;width:56px;height:8.75px;background:#f3f3f3;border-right:0.8px solid #d8d8d8"></div>
<div class="t" style="left:14.5px;top:53.85px;font-size:4.7px;color:#3a3a3a">Linetype</div>
<div class="a" style="left:70.5px;top:54.55px;width:14px;height:0.6px;background:#333"></div>
<div class="t" style="left:86px;top:53.85px;font-size:4.7px;color:#3a3a3a">ByLayer</div>
<div class="a" style="left:12.5px;top:59.00px;width:111.7px;height:8.75px;background:#fff;border-bottom:0.8px solid #d6d6d6;border-left:0.8px solid #d0d0d0"></div>
<div class="a" style="left:13px;top:59.00px;width:56px;height:8.75px;background:#f3f3f3;border-right:0.8px solid #d8d8d8"></div>
<div class="t" style="left:14.5px;top:62.60px;font-size:4.7px;color:#3a3a3a">Linetype scale</div>
<div class="t" style="left:70.5px;top:62.60px;font-size:4.7px;color:#3a3a3a">1.000</div>
<div class="a" style="left:12.5px;top:67.75px;width:111.7px;height:8.75px;background:#fff;border-bottom:0.8px solid #d6d6d6;border-left:0.8px solid #d0d0d0"></div>
<div class="a" style="left:13px;top:67.75px;width:56px;height:8.75px;background:#f3f3f3;border-right:0.8px solid #d8d8d8"></div>
<div class="t" style="left:14.5px;top:71.35px;font-size:4.7px;color:#3a3a3a">Lineweight</div>
<div class="a" style="left:70.5px;top:72.05px;width:14px;height:0.6px;background:#333"></div>
<div class="t" style="left:86px;top:71.35px;font-size:4.7px;color:#3a3a3a">ByLayer</div>
<div class="a" style="left:12.5px;top:76.50px;width:111.7px;height:8.75px;background:#fff;border-bottom:0.8px solid #d6d6d6;border-left:0.8px solid #d0d0d0"></div>
<div class="a" style="left:13px;top:76.50px;width:56px;height:8.75px;background:#f3f3f3;border-right:0.8px solid #d8d8d8"></div>
<div class="t" style="left:14.5px;top:80.10px;font-size:4.7px;color:#3a3a3a">Width</div>
<div class="t" style="left:70.5px;top:80.10px;font-size:4.7px;color:#3a3a3a">318.430</div>
<div class="a" style="left:12.5px;top:85.25px;width:111.7px;height:8.75px;background:#fff;border-bottom:0.8px solid #d6d6d6;border-left:0.8px solid #d0d0d0"></div>
<div class="a" style="left:13px;top:85.25px;width:56px;height:8.75px;background:#f3f3f3;border-right:0.8px solid #d8d8d8"></div>
<div class="t" style="left:14.5px;top:88.85px;font-size:4.7px;color:#3a3a3a">Thickness</div>
<div class="t" style="left:70.5px;top:88.85px;font-size:4.7px;color:#3a3a3a">0</div>
<div class="a" style="left:12.5px;top:94.00px;width:111.7px;height:8.75px;background:#fff;border-bottom:0.8px solid #d6d6d6;border-left:0.8px solid #d0d0d0"></div>
<div class="a" style="left:13px;top:94.00px;width:56px;height:8.75px;background:#f3f3f3;border-right:0.8px solid #d8d8d8"></div>
<div class="t" style="left:14.5px;top:97.60px;font-size:4.7px;color:#3a3a3a">Transparency</div>
<div class="t" style="left:70.5px;top:97.60px;font-size:4.7px;color:#3a3a3a">ByLayer</div>
<div class="a" style="left:6.5px;top:32.75px;width:6px;height:70.00px;background:#ececec"></div>
<div class="a" style="left:6.5px;top:104.75px;width:117.7px;height:8.75px;background:linear-gradient(#bcbcbc,#aaaaaa)"></div>
<div class="t" style="left:9px;top:108.95px;font-size:4.9px;font-weight:bold;color:#111">3D Visualization</div>
<svg class="a" style="left:117.5px;top:107.75px" width="4" height="3"><path d="M.4 2.4 L2 .5 L3.6 2.4Z" fill="#222"/></svg>
<div class="a" style="left:12.5px;top:113.50px;width:111.7px;height:8.75px;background:#fff;border-bottom:0.8px solid #d6d6d6;border-left:0.8px solid #d0d0d0"></div>
<div class="a" style="left:13px;top:113.50px;width:56px;height:8.75px;background:#f3f3f3;border-right:0.8px solid #d8d8d8"></div>
<div class="t" style="left:14.5px;top:117.10px;font-size:4.7px;color:#3a3a3a">Material</div>
<div class="t" style="left:70.5px;top:117.10px;font-size:4.7px;color:#3a3a3a">ByLayer</div>
<div class="a" style="left:12.5px;top:122.25px;width:111.7px;height:8.75px;background:#fff;border-bottom:0.8px solid #d6d6d6;border-left:0.8px solid #d0d0d0"></div>
<div class="a" style="left:13px;top:122.25px;width:56px;height:8.75px;background:#f3f3f3;border-right:0.8px solid #d8d8d8"></div>
<div class="t" style="left:14.5px;top:125.85px;font-size:4.7px;color:#3a3a3a">Shadow display</div>
<div class="t" style="left:70.5px;top:125.85px;font-size:4.7px;color:#3a3a3a">Shadows cast and received</div>
<div class="a" style="left:6.5px;top:113.50px;width:6px;height:17.50px;background:#ececec"></div>
<div class="a" style="left:6.5px;top:133.00px;width:117.7px;height:8.75px;background:linear-gradient(#bcbcbc,#aaaaaa)"></div>
<div class="t" style="left:9px;top:137.20px;font-size:4.9px;font-weight:bold;color:#111">Print style</div>
<svg class="a" style="left:117.5px;top:136.00px" width="4" height="3"><path d="M.4 2.4 L2 .5 L3.6 2.4Z" fill="#222"/></svg>
<div class="a" style="left:12.5px;top:141.75px;width:111.7px;height:8.75px;background:#fff;border-bottom:0.8px solid #d6d6d6;border-left:0.8px solid #d0d0d0"></div>
<div class="a" style="left:13px;top:141.75px;width:56px;height:8.75px;background:#f3f3f3;border-right:0.8px solid #d8d8d8"></div>
<div class="t" style="left:14.5px;top:145.35px;font-size:4.7px;color:#3a3a3a">Print style</div>
<div class="t" style="left:70.5px;top:145.35px;font-size:4.7px;color:#3a3a3a">ByColor</div>
<div class="a" style="left:12.5px;top:150.50px;width:111.7px;height:8.75px;background:#fff;border-bottom:0.8px solid #d6d6d6;border-left:0.8px solid #d0d0d0"></div>
<div class="a" style="left:13px;top:150.50px;width:56px;height:8.75px;background:#f3f3f3;border-right:0.8px solid #d8d8d8"></div>
<div class="t" style="left:14.5px;top:154.10px;font-size:4.7px;color:#3a3a3a">Print style table</div>
<div class="t" style="left:70.5px;top:154.10px;font-size:4.7px;color:#3a3a3a">Monochrome.ctb</div>
<div class="a" style="left:12.5px;top:159.25px;width:111.7px;height:8.75px;background:#fff;border-bottom:0.8px solid #d6d6d6;border-left:0.8px solid #d0d0d0"></div>
<div class="a" style="left:13px;top:159.25px;width:56px;height:8.75px;background:#f3f3f3;border-right:0.8px solid #d8d8d8"></div>
<div class="t" style="left:14.5px;top:162.85px;font-size:4.7px;color:#3a3a3a">Print table attached to</div>
<div class="t" style="left:70.5px;top:162.85px;font-size:4.7px;color:#3a3a3a">Model</div>
<div class="a" style="left:12.5px;top:168.00px;width:111.7px;height:8.75px;background:#fff;border-bottom:0.8px solid #d6d6d6;border-left:0.8px solid #d0d0d0"></div>
<div class="a" style="left:13px;top:168.00px;width:56px;height:8.75px;background:#f3f3f3;border-right:0.8px solid #d8d8d8"></div>
<div class="t" style="left:14.5px;top:171.60px;font-size:4.7px;color:#3a3a3a">Print table type</div>
<div class="t" style="left:70.5px;top:171.60px;font-size:4.7px;color:#3a3a3a">Color-dependent print style</div>
<div class="a" style="left:6.5px;top:141.75px;width:6px;height:35.00px;background:#ececec"></div>
<div class="a" style="left:6.5px;top:178.75px;width:117.7px;height:8.75px;background:linear-gradient(#bcbcbc,#aaaaaa)"></div>
<div class="t" style="left:9px;top:182.95px;font-size:4.9px;font-weight:bold;color:#111">View</div>
<svg class="a" style="left:117.5px;top:181.75px" width="4" height="3"><path d="M.4 2.4 L2 .5 L3.6 2.4Z" fill="#222"/></svg>
<div class="a" style="left:12.5px;top:187.50px;width:111.7px;height:8.75px;background:#fff;border-bottom:0.8px solid #d6d6d6;border-left:0.8px solid #d0d0d0"></div>
<div class="a" style="left:13px;top:187.50px;width:56px;height:8.75px;background:#f3f3f3;border-right:0.8px solid #d8d8d8"></div>
<div class="t" style="left:14.5px;top:191.10px;font-size:4.7px;color:#3a3a3a">Center X</div>
<div class="t" style="left:70.5px;top:191.10px;font-size:4.7px;color:#3a3a3a">4562.269</div>
<div class="a" style="left:12.5px;top:196.25px;width:111.7px;height:8.75px;background:#fff;border-bottom:0.8px solid #d6d6d6;border-left:0.8px solid #d0d0d0"></div>
<div class="a" style="left:13px;top:196.25px;width:56px;height:8.75px;background:#f3f3f3;border-right:0.8px solid #d8d8d8"></div>
<div class="t" style="left:14.5px;top:199.85px;font-size:4.7px;color:#3a3a3a">Center Y</div>
<div class="t" style="left:70.5px;top:199.85px;font-size:4.7px;color:#3a3a3a">10225.984</div>
<div class="a" style="left:12.5px;top:205.00px;width:111.7px;height:8.75px;background:#fff;border-bottom:0.8px solid #d6d6d6;border-left:0.8px solid #d0d0d0"></div>
<div class="a" style="left:13px;top:205.00px;width:56px;height:8.75px;background:#f3f3f3;border-right:0.8px solid #d8d8d8"></div>
<div class="t" style="left:14.5px;top:208.60px;font-size:4.7px;color:#3a3a3a">Center Z</div>
<div class="t" style="left:70.5px;top:208.60px;font-size:4.7px;color:#3a3a3a">0</div>
<div class="a" style="left:12.5px;top:213.75px;width:111.7px;height:8.75px;background:#fff;border-bottom:0.8px solid #d6d6d6;border-left:0.8px solid #d0d0d0"></div>
<div class="a" style="left:13px;top:213.75px;width:56px;height:8.75px;background:#f3f3f3;border-right:0.8px solid #d8d8d8"></div>
<div class="t" style="left:14.5px;top:217.35px;font-size:4.7px;color:#3a3a3a">Width</div>
<div class="t" style="left:70.5px;top:217.35px;font-size:4.7px;color:#3a3a3a">318.430</div>
<div class="a" style="left:12.5px;top:222.50px;width:111.7px;height:8.75px;background:#fff;border-bottom:0.8px solid #d6d6d6;border-left:0.8px solid #d0d0d0"></div>
<div class="a" style="left:13px;top:222.50px;width:56px;height:8.75px;background:#f3f3f3;border-right:0.8px solid #d8d8d8"></div>
<div class="t" style="left:14.5px;top:226.10px;font-size:4.7px;color:#3a3a3a">Height</div>
<div class="t" style="left:70.5px;top:226.10px;font-size:4.7px;color:#3a3a3a">155.030</div>
<div class="a" style="left:6.5px;top:187.50px;width:6px;height:43.75px;background:#ececec"></div>
<div class="a" style="left:6.5px;top:233.25px;width:117.7px;height:8.75px;background:linear-gradient(#bcbcbc,#aaaaaa)"></div>
<div class="t" style="left:9px;top:237.45px;font-size:4.9px;font-weight:bold;color:#111">Visual Style</div>
<svg class="a" style="left:117.5px;top:236.25px" width="4" height="3"><path d="M.4 2.4 L2 .5 L3.6 2.4Z" fill="#222"/></svg>
<div class="a" style="left:12.5px;top:242.00px;width:111.7px;height:8.75px;background:#fff;border-bottom:0.8px solid #d6d6d6;border-left:0.8px solid #d0d0d0"></div>
<div class="a" style="left:13px;top:242.00px;width:56px;height:8.75px;background:#f3f3f3;border-right:0.8px solid #d8d8d8"></div>
<div class="t" style="left:14.5px;top:245.60px;font-size:4.7px;color:#3a3a3a">Visual style</div>
<div class="t" style="left:70.5px;top:245.60px;font-size:4.7px;color:#3a3a3a">2D Wireframe</div>
<div class="a" style="left:12.5px;top:250.75px;width:111.7px;height:8.75px;background:#fff;border-bottom:0.8px solid #d6d6d6;border-left:0.8px solid #d0d0d0"></div>
<div class="a" style="left:13px;top:250.75px;width:56px;height:8.75px;background:#f3f3f3;border-right:0.8px solid #d8d8d8"></div>
<div class="t" style="left:14.5px;top:254.35px;font-size:4.7px;color:#3a3a3a">Background</div>
<div class="t" style="left:70.5px;top:254.35px;font-size:4.7px;color:#3a3a3a">On</div>
<div class="a" style="left:12.5px;top:259.50px;width:111.7px;height:8.75px;background:#fff;border-bottom:0.8px solid #d6d6d6;border-left:0.8px solid #d0d0d0"></div>
<div class="a" style="left:13px;top:259.50px;width:56px;height:8.75px;background:#f3f3f3;border-right:0.8px solid #d8d8d8"></div>
<div class="t" style="left:14.5px;top:263.10px;font-size:4.7px;color:#3a3a3a">Material mode</div>
<div class="t" style="left:70.5px;top:263.10px;font-size:4.7px;color:#3a3a3a">None</div>
<div class="a" style="left:12.5px;top:268.25px;width:111.7px;height:8.75px;background:#fff;border-bottom:0.8px solid #d6d6d6;border-left:0.8px solid #d0d0d0"></div>
<div class="a" style="left:13px;top:268.25px;width:56px;height:8.75px;background:#f3f3f3;border-right:0.8px solid #d8d8d8"></div>
<div class="t" style="left:14.5px;top:271.85px;font-size:4.7px;color:#3a3a3a">Halo gap</div>
<div class="t" style="left:70.5px;top:271.85px;font-size:4.7px;color:#3a3a3a">0</div>
<div class="a" style="left:12.5px;top:277.00px;width:111.7px;height:8.75px;background:#fff;border-bottom:0.8px solid #d6d6d6;border-left:0.8px solid #d0d0d0"></div>
<div class="a" style="left:13px;top:277.00px;width:56px;height:8.75px;background:#f3f3f3;border-right:0.8px solid #d8d8d8"></div>
<div class="t" style="left:14.5px;top:280.60px;font-size:4.7px;color:#3a3a3a">Face opacity</div>
<div class="t" style="left:70.5px;top:280.60px;font-size:4.7px;color:#3a3a3a">-60</div>
<div class="a" style="left:12.5px;top:285.75px;width:111.7px;height:8.75px;background:#fff;border-bottom:0.8px solid #d6d6d6;border-left:0.8px solid #d0d0d0"></div>
<div class="a" style="left:13px;top:285.75px;width:56px;height:8.75px;background:#f3f3f3;border-right:0.8px solid #d8d8d8"></div>
<div class="t" style="left:14.5px;top:289.35px;font-size:4.7px;color:#3a3a3a">Face style</div>
<div class="t" style="left:70.5px;top:289.35px;font-size:4.7px;color:#3a3a3a">None</div>
<div class="a" style="left:12.5px;top:294.50px;width:111.7px;height:8.75px;background:#fff;border-bottom:0.8px solid #d6d6d6;border-left:0.8px solid #d0d0d0"></div>
<div class="a" style="left:13px;top:294.50px;width:56px;height:8.75px;background:#f3f3f3;border-right:0.8px solid #d8d8d8"></div>
<div class="t" style="left:14.5px;top:298.10px;font-size:4.7px;color:#3a3a3a">Face highlight</div>
<div class="t" style="left:70.5px;top:298.10px;font-size:4.7px;color:#3a3a3a">-30</div>
<div class="a" style="left:12.5px;top:303.25px;width:111.7px;height:8.75px;background:#fff;border-bottom:0.8px solid #d6d6d6;border-left:0.8px solid #d0d0d0"></div>
<div class="a" style="left:13px;top:303.25px;width:56px;height:8.75px;background:#f3f3f3;border-right:0.8px solid #d8d8d8"></div>
<div class="t" style="left:14.5px;top:306.85px;font-size:4.7px;color:#3a3a3a">Edges</div>
<div class="t" style="left:70.5px;top:306.85px;font-size:4.7px;color:#3a3a3a">Isolines</div>
<div class="a" style="left:12.5px;top:312.00px;width:111.7px;height:8.75px;background:#fff;border-bottom:0.8px solid #d6d6d6;border-left:0.8px solid #d0d0d0"></div>
<div class="a" style="left:13px;top:312.00px;width:56px;height:8.75px;background:#f3f3f3;border-right:0.8px solid #d8d8d8"></div>
<div class="t" style="left:14.5px;top:315.60px;font-size:4.7px;color:#3a3a3a">Edge jitter</div>
<div class="t" style="left:70.5px;top:315.60px;font-size:4.7px;color:#3a3a3a">-3</div>
<div class="a" style="left:6.5px;top:242.00px;width:6px;height:78.75px;background:#ececec"></div>
</div>
<div class="a" style="left:124.5px;top:90px;width:2px;height:311px;background:#e8e8e8"></div>
<div class="a" style="left:126.5px;top:82px;width:1.5px;height:319px;background:#4a4a4a"></div>
<svg class="a" style="left:128px;top:82px" width="640" height="311" viewBox="128 82 640 311" font-family="Liberation Sans">
<rect x="128" y="82" width="640" height="311" fill="#000"/>
<path d="M128,170 L164.4,182.8 M182.5,189.4 L183.5,189.8 M201.9,196.8 L239.3,210.7 M258.6,218.2 L292,230.5" stroke="#4a5a98" stroke-width=".8" fill="none"/>
<path d="M208.2,87.2 Q211.5,98 216,105.4  C219.9,106.8 233.2,112.1 239.5,113.9 C245.8,115.7 249.1,115.8 253.8,116.2 C258.6,116.6 263.0,116.6 268.0,116.2 C273.0,115.8 281.1,114.0 283.8,113.6 L284.2,114.8 A161.0,161.0 0 1,1 213.8,318.6 C211.7,316.3 205.3,309.4 201.0,305.0 C196.7,300.6 192.1,295.6 188.0,292.0 C183.9,288.4 181.8,286.1 176.2,283.4 C170.6,280.7 158.3,276.9 154.7,275.6 L128,286.6" stroke="#8c8a72" stroke-width=".8" fill="none" stroke-dasharray="10 4.6"/>
<line x1="240.7" y1="82" x2="226.8" y2="120.6" stroke="#bdbdbd" stroke-width=".8"/>
<line x1="223.2" y1="130" x2="219.8" y2="139.1" stroke="#bdbdbd" stroke-width=".8"/>
<line x1="286.4" y1="82" x2="322.2" y2="165" stroke="#bdbdbd" stroke-width=".8"/>
<line x1="413.8" y1="136.7" x2="405.2" y2="165" stroke="#bdbdbd" stroke-width=".8"/>
<line x1="490.3" y1="232.1" x2="476" y2="236" stroke="#bdbdbd" stroke-width=".8"/>
<line x1="397.8" y1="300.6" x2="443.75" y2="358.5" stroke="#bdbdbd" stroke-width=".8"/>
<line x1="345.3" y1="300" x2="315.3" y2="378.3" stroke="#bdbdbd" stroke-width=".8"/>
<line x1="286.5" y1="293.2" x2="153.7" y2="356.4" stroke="#bdbdbd" stroke-width=".8"/>
<line x1="177.5" y1="252.1" x2="140.8" y2="345.7" stroke="#bdbdbd" stroke-width=".8"/>
<path d="M173,82 L195,129.7 L219.8,139.1 C245,147 272,147.5 309,136.1 A130.5,130.5 0 1,1 244.7,312.5" stroke="#207c20" stroke-width="1.2" fill="none"/>
<path d="M128,253.4 L152.1,242.4 L177.5,252.1 C195,258 222,278 244.7,312.5" stroke="#207c20" stroke-width="1.2" fill="none"/>
<line x1="413.8" y1="136.7" x2="441" y2="82" stroke="#207c20" stroke-width="1.2"/>
<line x1="490.3" y1="232.1" x2="714.4" y2="189.7" stroke="#207c20" stroke-width="1.2"/>
<line x1="714.4" y1="82" x2="714.4" y2="393" stroke="#207c20" stroke-width="1.2"/>
<line x1="714.5" y1="289.5" x2="768" y2="289.5" stroke="#207c20" stroke-width="1.2"/>
<line x1="443.75" y1="358.5" x2="470.8" y2="393" stroke="#207c20" stroke-width="1.2"/>
<line x1="315.3" y1="378.3" x2="310.6" y2="393" stroke="#207c20" stroke-width="1.2"/>
<line x1="129.8" y1="82" x2="129.8" y2="110.5" stroke="#1c5e1c" stroke-width="1.1"/><line x1="129.5" y1="87.7" x2="152.5" y2="87.7" stroke="#761414" stroke-width="1"/>
<path d="M547,82 L582.4,114.3 L611,82" stroke="#8a1414" stroke-width=".9" fill="none"/>
<path d="M582.4,114.3 L550.3,134.7 M504.8,163.7 L476,182" stroke="#2a9a2a" stroke-width=".8"/>
<path d="M582.4,114.3 L561.4,124.2 L564.6,129.1Z" fill="#00e600"/>
<path d="M476,182 L497.0,172.1 L493.8,167.2Z" fill="#00e600"/>
<text x="525.2" y="149.2" fill="#2a9a2a" font-size="12.3" text-anchor="middle" dominant-baseline="central" transform="rotate(-34.5 525.2 149.2)" stroke="#000" stroke-width="2" paint-order="stroke">65.61'</text>
<g><path d="M582.4,114.3 L587.7,142.8 M594.6,180.2 L600,209.6" stroke="#2a9a2a" stroke-width=".8"/>
<path d="M582.4,114.3 L583.7,137.4 L589.4,136.4Z" fill="#00e600"/>
<path d="M600,209.6 L598.7,186.5 L593.0,187.5Z" fill="#00e600"/>
<text x="588.6" y="161.7" fill="#2a9a2a" font-size="12.3" text-anchor="middle" dominant-baseline="central" transform="rotate(79.5 588.6 161.7)" stroke="#000" stroke-width="2" paint-order="stroke">49.06'</text>
</g><text x="179.3" y="105.4" fill="#207c20" font-size="7" text-anchor="middle" dominant-baseline="central" transform="rotate(65 179.3 105.4)" textLength="20" lengthAdjust="spacingAndGlyphs" stroke="#000" stroke-width="2.2" paint-order="stroke">28.28'</text>
<text x="206" y="139" fill="#207c20" font-size="7" text-anchor="middle" dominant-baseline="central" transform="rotate(19 206 139)" textLength="19" lengthAdjust="spacingAndGlyphs" stroke="#000" stroke-width="2.2" paint-order="stroke">13.25'</text>
<text x="162.8" y="251.5" fill="#207c20" font-size="7" text-anchor="middle" dominant-baseline="central" transform="rotate(19 162.8 251.5)" textLength="18" lengthAdjust="spacingAndGlyphs" stroke="#000" stroke-width="2.2" paint-order="stroke">13.25'</text>
<text x="132" y="257.5" fill="#207c20" font-size="7" text-anchor="middle" dominant-baseline="central" transform="rotate(-22 132 257.5)" textLength="9" lengthAdjust="spacingAndGlyphs" stroke="#000" stroke-width="2.2" paint-order="stroke">28'</text>
<text x="603.2" y="216.4" fill="#207c20" font-size="6.2" text-anchor="middle" dominant-baseline="central" transform="rotate(-10.7 603.2 216.4)" textLength="26" lengthAdjust="spacingAndGlyphs" stroke="#000" stroke-width="2.2" paint-order="stroke">113.87'</text>
<text x="719.5" y="189" fill="#207c20" font-size="6.5" text-anchor="middle" dominant-baseline="central" transform="rotate(-90 719.5 189)" textLength="24" lengthAdjust="spacingAndGlyphs" stroke="#000" stroke-width="2.2" paint-order="stroke">100.00'</text>
<text x="719.5" y="384" fill="#207c20" font-size="6.5" text-anchor="middle" dominant-baseline="central" transform="rotate(-90 719.5 384)" textLength="18" lengthAdjust="spacingAndGlyphs" stroke="#000" stroke-width="2.2" paint-order="stroke">0.00'</text>
<text x="228.1" y="101" fill="#b21c1c" font-size="7.6" text-anchor="start" dominant-baseline="central" transform="rotate(-70.2 228.1 101)" textLength="43" lengthAdjust="spacingAndGlyphs" stroke="#000" stroke-width="2.2" paint-order="stroke">N20°23'18"E</text>
<text x="300.5" y="99" fill="#b21c1c" font-size="7.6" text-anchor="end" dominant-baseline="central" transform="rotate(66.8 300.5 99)" textLength="15" lengthAdjust="spacingAndGlyphs" stroke="#000" stroke-width="2.2" paint-order="stroke">26"E</text>
<text x="152.65" y="307.65" fill="#b21c1c" font-size="7.8" text-anchor="middle" dominant-baseline="central" transform="rotate(-65.2 152.65 307.65)" textLength="45" lengthAdjust="spacingAndGlyphs" stroke="#000" stroke-width="2.2" paint-order="stroke">N20°23'18"E</text>
<text x="187.4" y="334.4" fill="#b21c1c" font-size="7.8" text-anchor="middle" dominant-baseline="central" transform="rotate(-26 187.4 334.4)" textLength="43" lengthAdjust="spacingAndGlyphs" stroke="#000" stroke-width="2.2" paint-order="stroke">N64°20'02"E</text>
<text x="280" y="293" fill="#b21c1c" font-size="7.8" text-anchor="start" dominant-baseline="central" transform="rotate(-26 280 293)" textLength="43" lengthAdjust="spacingAndGlyphs" stroke="#000" stroke-width="2.2" paint-order="stroke">S64°20'02"W</text>
<text x="326.5" y="335.5" fill="#b21c1c" font-size="7.8" text-anchor="start" dominant-baseline="central" transform="rotate(-69 326.5 335.5)" textLength="43" lengthAdjust="spacingAndGlyphs" stroke="#000" stroke-width="2.2" paint-order="stroke">S20°43'41"W</text>
<text x="421" y="320" fill="#b21c1c" font-size="7.8" text-anchor="end" dominant-baseline="central" transform="rotate(51.5 421 320)" textLength="27" lengthAdjust="spacingAndGlyphs" stroke="#000" stroke-width="2.2" paint-order="stroke">°52'43"E</text>
<text x="708" y="139" fill="#b21c1c" font-size="7.4" text-anchor="middle" dominant-baseline="central" transform="rotate(-90 708 139)" textLength="18" lengthAdjust="spacingAndGlyphs" stroke="#000" stroke-width="2.2" paint-order="stroke">19°E</text>
<text x="709.4" y="189.5" fill="#b21c1c" font-size="7.4" text-anchor="middle" dominant-baseline="central" transform="rotate(-90 709.4 189.5)" textLength="13" lengthAdjust="spacingAndGlyphs" stroke="#000" stroke-width="2.2" paint-order="stroke">00°</text>
<text x="708.2" y="240" fill="#b21c1c" font-size="7.4" text-anchor="middle" dominant-baseline="central" transform="rotate(-90 708.2 240)" textLength="13" lengthAdjust="spacingAndGlyphs" stroke="#000" stroke-width="2.2" paint-order="stroke">N0°</text>
<text x="593.7" y="346" fill="#b21c1c" font-size="7" text-anchor="middle" textLength="26.5" lengthAdjust="spacingAndGlyphs">LOT 15</text>
<text x="593.7" y="354.2" fill="#b21c1c" font-size="7" text-anchor="middle" xml:space="preserve" textLength="43.5" lengthAdjust="spacing">0.5   Acres.</text>
<text x="594.2" y="361.5" fill="#b21c1c" font-size="7" text-anchor="middle" xml:space="preserve" textLength="57.5" lengthAdjust="spacing">19871.4   Sq.ft.</text>
<text x="195.6" y="128.1" fill="#2896c4" font-size="6.6" textLength="8.4" lengthAdjust="spacingAndGlyphs" stroke="#000" stroke-width="1.6" paint-order="stroke">92</text>
<text x="197.79999999999998" y="131.0" fill="#c8b400" font-size="4.2" textLength="4.8" lengthAdjust="spacingAndGlyphs">92</text>
<path d="M192.2,126.89999999999999 L197.8,132.5 M197.8,126.89999999999999 L192.2,132.5" stroke="#d8d8d8" stroke-width=".7"/>
<text x="220.4" y="137.5" fill="#2896c4" font-size="6.6" textLength="8.4" lengthAdjust="spacingAndGlyphs" stroke="#000" stroke-width="1.6" paint-order="stroke">93</text>
<text x="222.6" y="140.4" fill="#c8b400" font-size="4.2" textLength="4.8" lengthAdjust="spacingAndGlyphs">93</text>
<path d="M217.0,136.29999999999998 L222.60000000000002,141.9 M222.60000000000002,136.29999999999998 L217.0,141.9" stroke="#d8d8d8" stroke-width=".7"/>
<text x="309.6" y="134.5" fill="#2896c4" font-size="6.6" textLength="8.4" lengthAdjust="spacingAndGlyphs" stroke="#000" stroke-width="1.6" paint-order="stroke">94</text>
<text x="311.8" y="137.4" fill="#c8b400" font-size="4.2" textLength="4.8" lengthAdjust="spacingAndGlyphs">94</text>
<path d="M306.2,133.29999999999998 L311.8,138.9 M311.8,133.29999999999998 L306.2,138.9" stroke="#d8d8d8" stroke-width=".7"/>
<text x="414.40000000000003" y="135.1" fill="#2896c4" font-size="6.6" textLength="12.600000000000001" lengthAdjust="spacingAndGlyphs" stroke="#000" stroke-width="1.6" paint-order="stroke">190</text>
<text x="416.6" y="138.0" fill="#c8b400" font-size="4.2" textLength="7.199999999999999" lengthAdjust="spacingAndGlyphs">190</text>
<path d="M411.0,133.89999999999998 L416.6,139.5 M416.6,133.89999999999998 L411.0,139.5" stroke="#d8d8d8" stroke-width=".7"/>
<text x="490.90000000000003" y="230.5" fill="#2896c4" font-size="6.6" textLength="12.600000000000001" lengthAdjust="spacingAndGlyphs" stroke="#000" stroke-width="1.6" paint-order="stroke">191</text>
<text x="493.1" y="233.4" fill="#c8b400" font-size="4.2" textLength="7.199999999999999" lengthAdjust="spacingAndGlyphs">191</text>
<path d="M487.5,229.29999999999998 L493.1,234.9 M493.1,229.29999999999998 L487.5,234.9" stroke="#d8d8d8" stroke-width=".7"/>
<text x="444.35" y="356.9" fill="#2896c4" font-size="6.6" textLength="12.600000000000001" lengthAdjust="spacingAndGlyphs" stroke="#000" stroke-width="1.6" paint-order="stroke">192</text>
<text x="446.55" y="359.79999999999995" fill="#c8b400" font-size="4.2" textLength="7.199999999999999" lengthAdjust="spacingAndGlyphs">192</text>
<path d="M440.95,355.7 L446.55,361.3 M446.55,355.7 L440.95,361.3" stroke="#d8d8d8" stroke-width=".7"/>
<text x="315.90000000000003" y="376.7" fill="#2896c4" font-size="6.6" textLength="12.600000000000001" lengthAdjust="spacingAndGlyphs" stroke="#000" stroke-width="1.6" paint-order="stroke">693</text>
<text x="318.1" y="379.59999999999997" fill="#c8b400" font-size="4.2" textLength="7.199999999999999" lengthAdjust="spacingAndGlyphs">693</text>
<path d="M312.5,375.5 L318.1,381.1 M318.1,375.5 L312.5,381.1" stroke="#d8d8d8" stroke-width=".7"/>
<text x="245.29999999999998" y="310.9" fill="#2896c4" font-size="6.6" textLength="12.600000000000001" lengthAdjust="spacingAndGlyphs" stroke="#000" stroke-width="1.6" paint-order="stroke">135</text>
<text x="247.49999999999997" y="313.79999999999995" fill="#c8b400" font-size="4.2" textLength="7.199999999999999" lengthAdjust="spacingAndGlyphs">135</text>
<path d="M241.89999999999998,309.7 L247.5,315.3 M247.5,309.7 L241.89999999999998,315.3" stroke="#d8d8d8" stroke-width=".7"/>
<text x="152.7" y="240.8" fill="#2896c4" font-size="6.6" textLength="8.4" lengthAdjust="spacingAndGlyphs" stroke="#000" stroke-width="1.6" paint-order="stroke">98</text>
<text x="154.89999999999998" y="243.70000000000002" fill="#c8b400" font-size="4.2" textLength="4.8" lengthAdjust="spacingAndGlyphs">98</text>
<path d="M149.29999999999998,239.6 L154.9,245.20000000000002 M154.9,239.6 L149.29999999999998,245.20000000000002" stroke="#d8d8d8" stroke-width=".7"/>
<text x="178.1" y="250.5" fill="#2896c4" font-size="6.6" textLength="8.4" lengthAdjust="spacingAndGlyphs" stroke="#000" stroke-width="1.6" paint-order="stroke">99</text>
<text x="180.29999999999998" y="253.4" fill="#c8b400" font-size="4.2" textLength="4.8" lengthAdjust="spacingAndGlyphs">99</text>
<path d="M174.7,249.29999999999998 L180.3,254.9 M180.3,249.29999999999998 L174.7,254.9" stroke="#d8d8d8" stroke-width=".7"/>
<text x="715.0" y="188.1" fill="#2896c4" font-size="6.6" textLength="12.600000000000001" lengthAdjust="spacingAndGlyphs" stroke="#000" stroke-width="1.6" paint-order="stroke">194</text>
<text x="717.2" y="191.0" fill="#c8b400" font-size="4.2" textLength="7.199999999999999" lengthAdjust="spacingAndGlyphs">194</text>
<path d="M711.6,186.89999999999998 L717.1999999999999,192.5 M717.1999999999999,186.89999999999998 L711.6,192.5" stroke="#d8d8d8" stroke-width=".7"/>
<text x="715.1" y="287.9" fill="#2896c4" font-size="6.6" textLength="8.4" lengthAdjust="spacingAndGlyphs" stroke="#000" stroke-width="1.6" paint-order="stroke">58</text>
<text x="717.3000000000001" y="290.79999999999995" fill="#c8b400" font-size="4.2" textLength="4.8" lengthAdjust="spacingAndGlyphs">58</text>
<path d="M711.7,286.7 L717.3,292.3 M717.3,286.7 L711.7,292.3" stroke="#d8d8d8" stroke-width=".7"/>
<text x="715.1" y="86.4" fill="#2896c4" font-size="6.6" textLength="8.4" lengthAdjust="spacingAndGlyphs" stroke="#000" stroke-width="1.6" paint-order="stroke">65</text>
<text x="717.3000000000001" y="89.30000000000001" fill="#c8b400" font-size="4.2" textLength="4.8" lengthAdjust="spacingAndGlyphs">65</text>
<path d="M711.7,85.2 L717.3,90.8 M717.3,85.2 L711.7,90.8" stroke="#d8d8d8" stroke-width=".7"/>
<path d="M132.5,362.5 L137.5,367.5 M137.5,362.5 L132.5,367.5" stroke="#d8d8d8" stroke-width=".7"/>
<text x="135" y="363.5" fill="#2896c4" font-size="6">130</text><text x="136.5" y="366.5" fill="#c8b400" font-size="3">130</text>
<text x="135" y="372" fill="#2896c4" font-size="6">RAD</text>
<rect x="139.5" y="377" width="6.2" height="6" fill="none" stroke="#c8c8c8" stroke-width=".7"/>
<path d="M142.6,377 V353 M139.5,353 L142.6,345.6 L145.7,353 Z" stroke="#20a020" stroke-width=".8" fill="none"/>
<path d="M145.7,380 H168.6 M168.6,376.9 L178,380 L168.6,383.1 Z" stroke="#b01818" stroke-width=".8" fill="none"/>
<text x="142" y="337.5" fill="#c8c8c8" font-size="6.5" text-anchor="middle" dominant-baseline="central">Y</text>
<text x="186.5" y="380.2" fill="#c8c8c8" font-size="6.5" text-anchor="middle" dominant-baseline="central">X</text>
</svg>
<div class="a" style="left:292px;top:165px;width:184.5px;height:135px;background:#f0f0f0;border:0.6px solid #3aa6c8;box-shadow:0 0 3px rgba(0,0,0,.4);overflow:hidden;z-index:20">
<div class="a" style="left:-0.60px;top:-0.60px;width:186.00px;height:12.20px;background:#18a3c7"></div>
<div class="t" style="left:2.90px;top:3.20px;font-size:5.2px;color:#222;transform:scaleX(0.9);transform-origin:0 50%;color:#12303c">Labeling Defaults</div>
<svg class="a" style="left:175.3px;top:3.6px" width="5" height="5"><path d="M.5 .5 L4.5 4.5 M4.5 .5 L.5 4.5" stroke="#1a2a30" stroke-width=".6"/></svg>
<div class="a" style="left:2.40px;top:23.00px;width:176.50px;height:96.00px;background:#fff;border:0.5px solid #d9d9d9"></div>
<div class="a" style="left:2.40px;top:15.80px;width:20.70px;height:7.30px;background:#f0f0f0;border:0.5px solid #d9d9d9"></div>
<div class="t" style="left:2.40px;width:20.70px;text-align:center;top:17.20px;font-size:4.8px;color:#222;transform:scaleX(0.86)">Bearings</div>
<div class="a" style="left:23.70px;top:14.40px;width:23.70px;height:9.20px;background:#fff;border:0.5px solid #d9d9d9;border-bottom:none"></div>
<div class="t" style="left:23.70px;width:23.70px;text-align:center;top:16.60px;font-size:4.8px;color:#222;transform:scaleX(0.86)">Distances</div>
<div class="a" style="left:47.40px;top:15.80px;width:25.50px;height:7.30px;background:#f0f0f0;border:0.5px solid #d9d9d9"></div>
<div class="t" style="left:47.40px;width:25.50px;text-align:center;top:17.20px;font-size:4.8px;color:#222;transform:scaleX(0.86)">Elevations</div>
<div class="a" style="left:72.90px;top:15.80px;width:28.10px;height:7.30px;background:#f0f0f0;border:0.5px solid #d9d9d9"></div>
<div class="t" style="left:72.90px;width:28.10px;text-align:center;top:17.20px;font-size:4.8px;color:#222;transform:scaleX(0.86)">Descriptions</div>
<div class="a" style="left:101.00px;top:15.80px;width:32.10px;height:7.30px;background:#f0f0f0;border:0.5px solid #d9d9d9"></div>
<div class="t" style="left:101.00px;width:32.10px;text-align:center;top:17.20px;font-size:4.8px;color:#222;transform:scaleX(0.86)">Point Identifiers</div>
<div class="a" style="left:133.10px;top:15.80px;width:28.90px;height:7.30px;background:#f0f0f0;border:0.5px solid #d9d9d9"></div>
<div class="t" style="left:133.10px;width:28.90px;text-align:center;top:17.20px;font-size:4.8px;color:#222;transform:scaleX(0.86)">Curve Labels</div>
<div class="t" style="right:136.30px;top:30.55px;font-size:4.9px;color:#222;transform:scaleX(0.86);transform-origin:100% 50%;">Style Index:</div>
<div class="t" style="right:136.30px;top:40.25px;font-size:4.9px;color:#222;transform:scaleX(0.86);transform-origin:100% 50%;">Leroy:</div>
<div class="t" style="right:136.30px;top:50.45px;font-size:4.9px;color:#222;transform:scaleX(0.86);transform-origin:100% 50%;">Style Name:</div>
<div class="t" style="right:136.30px;top:60.55px;font-size:4.9px;color:#222;transform:scaleX(0.86);transform-origin:100% 50%;">Layer name:</div>
<div class="a" style="left:49.60px;top:28.70px;width:40.60px;height:8.30px;background:#e1e1e1;border:0.5px solid #c6c6c6"></div>
<div class="t" style="left:51.40px;top:30.55px;font-size:4.9px;color:#222;transform:scaleX(0.86);transform-origin:0 50%;">Style #1</div>
<svg class="a" style="left:84.40px;top:31.90px" width="4" height="3"><path d="M.3 .6 L2 2.2 L3.7 .6" stroke="#444" stroke-width=".5" fill="none"/></svg>
<div class="a" style="left:49.60px;top:38.30px;width:40.60px;height:8.50px;background:#fff;border:0.5px solid #bdbdbd"></div>
<div class="t" style="left:50.90px;top:40.15px;font-size:4.9px;color:#222;transform:scaleX(0.86);transform-origin:0 50%;">60</div>
<div class="a" style="left:49.60px;top:48.70px;width:40.60px;height:8.50px;background:#fff;border:0.5px solid #bdbdbd"></div>
<div class="t" style="left:50.90px;top:50.55px;font-size:4.9px;color:#222;transform:scaleX(0.86);transform-origin:0 50%;">DISTANCE1</div>
<div class="a" style="left:49.60px;top:58.80px;width:40.60px;height:8.50px;background:#fff;border:0.5px solid #bdbdbd"></div>
<div class="t" style="left:50.90px;top:60.65px;font-size:4.9px;color:#222;transform:scaleX(0.86);transform-origin:0 50%;">DISTANCE1</div>
<div class="a" style="left:8.30px;top:70.10px;width:39.10px;height:8.20px;background:#e1e1e1;border:0.5px solid #c6c6c6"></div>
<div class="t" style="left:8.30px;width:39.10px;text-align:center;top:71.75px;font-size:4.9px;color:#222;transform:scaleX(0.86)">Layer Color</div>
<div class="a" style="left:49.90px;top:70.10px;width:40.50px;height:8.80px;background:#00d200;border:0.5px solid #bdbdbd"></div>
<div class="t" style="right:52.80px;top:30.25px;font-size:4.9px;color:#222;transform:scaleX(0.86);transform-origin:100% 50%;">Text offset:</div>
<div class="a" style="left:134.80px;top:28.30px;width:40.60px;height:8.70px;background:#fff;border:0.5px solid #3c8ad0"></div>
<div class="a" style="left:136.40px;top:29.70px;width:6.50px;height:5.80px;background:#2a7ad8"></div>
<div class="t" style="left:136.70px;top:30.25px;font-size:4.9px;color:#222;transform:scaleX(0.86);transform-origin:0 50%;color:#fff">0.5</div>
<div class="t" style="right:52.80px;top:40.25px;font-size:4.9px;color:#222;transform:scaleX(0.86);transform-origin:100% 50%;">Oblique angle:</div>
<div class="a" style="left:134.80px;top:38.30px;width:40.60px;height:8.70px;background:#fff;border:0.5px solid #bdbdbd"></div>
<div class="t" style="left:136.20px;top:40.25px;font-size:4.9px;color:#222;transform:scaleX(0.86);transform-origin:0 50%;">0</div>
<div class="t" style="right:52.80px;top:50.45px;font-size:4.9px;color:#222;transform:scaleX(0.86);transform-origin:100% 50%;">Width:</div>
<div class="a" style="left:134.80px;top:48.50px;width:40.60px;height:8.70px;background:#fff;border:0.5px solid #bdbdbd"></div>
<div class="t" style="left:136.20px;top:50.45px;font-size:4.9px;color:#222;transform:scaleX(0.86);transform-origin:0 50%;">1</div>
<div class="t" style="right:62.60px;top:60.65px;font-size:4.9px;color:#222;transform:scaleX(0.86);transform-origin:100% 50%;">Scale Factor:</div>
<div class="a" style="left:134.80px;top:58.70px;width:40.60px;height:8.70px;background:#fff;border:0.5px solid #bdbdbd"></div>
<div class="t" style="left:136.20px;top:60.65px;font-size:4.9px;color:#222;transform:scaleX(0.86);transform-origin:0 50%;">1</div>
<div class="t" style="right:52.80px;top:71.05px;font-size:4.9px;color:#222;transform:scaleX(0.86);transform-origin:100% 50%;">Decimal Places:</div>
<div class="a" style="left:134.80px;top:69.10px;width:40.60px;height:8.70px;background:#fff;border:0.5px solid #bdbdbd"></div>
<div class="t" style="left:136.20px;top:71.05px;font-size:4.9px;color:#222;transform:scaleX(0.86);transform-origin:0 50%;">2</div>
<div class="a" style="left:123.40px;top:59.00px;width:9.70px;height:8.60px;background:#e1e1e1;border:0.5px solid #c4c4c4"></div>
<div class="t" style="left:126.40px;top:61.60px;font-size:4px;color:#222;transform:scaleX(0.86);transform-origin:0 50%;color:#999">...</div>
<svg class="a" style="left:152.90px;top:28.40px" width="4" height="8"><path d="M.5 .5 H3.5 M2 .5 V7 M.5 7 H3.5" stroke="#222" stroke-width=".6"/></svg>
<div class="t" style="right:136.30px;top:82.85px;font-size:4.9px;color:#222;transform:scaleX(0.86);transform-origin:100% 50%;">Font file name:</div>
<div class="a" style="left:49.60px;top:81.00px;width:90.50px;height:8.60px;background:#fff;border:0.5px solid #bdbdbd"></div>
<div class="t" style="left:50.90px;top:82.85px;font-size:4.9px;color:#222;transform:scaleX(0.86);transform-origin:0 50%;">MSURVEY.SHX</div>
<div class="a" style="left:142.40px;top:80.90px;width:30.00px;height:8.60px;background:#e1e1e1;border:0.5px solid #c6c6c6"></div>
<div class="t" style="left:142.40px;width:30.00px;text-align:center;top:82.75px;font-size:4.9px;color:#222;transform:scaleX(0.86)">Browse</div>
<div class="t" style="left:47.90px;top:97.25px;font-size:4.7px;color:#222;transform:scaleX(0.86);transform-origin:0 50%;">Foot Symbol ' when Imperial</div>
<div class="t" style="left:47.90px;top:102.75px;font-size:4.7px;color:#222;transform:scaleX(0.86);transform-origin:0 50%;">Meter Symbol m when Metric</div>
<div class="a" style="left:105.80px;top:99.30px;width:5.50px;height:5.60px;background:#fff;border:0.6px solid #9a9a9a"></div>
<svg class="a" style="left:105.90px;top:99.30px" width="6" height="6"><path d="M1.1 2.9 L2.4 4.3 L4.5 1.4" stroke="#555" stroke-width=".7" fill="none"/></svg>
<div class="t" style="right:53.20px;top:95.45px;font-size:4.7px;color:#222;transform:scaleX(0.86);transform-origin:100% 50%;">Prefix:</div>
<div class="t" style="right:53.20px;top:106.05px;font-size:4.7px;color:#222;transform:scaleX(0.86);transform-origin:100% 50%;">Suffix:</div>
<div class="a" style="left:134.80px;top:93.20px;width:40.30px;height:8.40px;background:#fff;border:0.5px solid #bdbdbd"></div>
<div class="a" style="left:134.80px;top:103.60px;width:40.30px;height:8.60px;background:#fff;border:0.5px solid #bdbdbd"></div>
<div class="a" style="left:87.00px;top:122.80px;width:28.70px;height:8.30px;background:#e1e1e1;border:0.7px solid #2f7fd0"></div>
<div class="t" style="left:87.00px;width:28.70px;text-align:center;top:124.55px;font-size:4.9px;color:#222;transform:scaleX(0.86)">OK</div>
<div class="a" style="left:118.40px;top:122.80px;width:29.50px;height:8.30px;background:#e1e1e1;border:0.5px solid #c6c6c6"></div>
<div class="t" style="left:118.40px;width:29.50px;text-align:center;top:124.55px;font-size:4.9px;color:#222;transform:scaleX(0.86)">Cancel</div>
<div class="a" style="left:151.40px;top:122.80px;width:29.30px;height:8.30px;background:#e1e1e1;border:0.5px solid #c6c6c6"></div>
<div class="t" style="left:151.40px;width:29.30px;text-align:center;top:124.55px;font-size:4.9px;color:#222;transform:scaleX(0.86)">Help</div>
</div>
<div class="a" style="left:720.5px;top:84.8px;width:45.2px;height:79.5px;background:#f0f0f0;border:0.5px solid #d0d0d0;z-index:15"></div>
<div class="t" style="left:724px;top:87.85px;font-size:5.3px;color:#b4b4b4;transform:scaleX(0.9);transform-origin:0 50%;z-index:16">Hot Toggles!</div>
<div class="a" style="left:757.5px;top:86.7px;width:7.2px;height:8.2px;background:#dcdcdc;z-index:16"></div>
<div class="a" style="left:722.7px;top:97.90px;width:5px;height:5px;background:#fff;border:0.6px solid #8a8a8a;z-index:16"></div>
<svg class="a" style="left:722.7px;top:97.90px;z-index:17" width="5" height="5"><path d="M1 2.5 L2.1 3.7 L4.1 1.2" stroke="#444" stroke-width=".7" fill="none"/></svg>
<div class="t" style="left:729.4px;top:97.90px;font-size:5.0px;color:#222;transform:scaleX(0.84);transform-origin:0 50%;z-index:16">Point Protection</div>
<div class="a" style="left:722.7px;top:103.80px;width:5px;height:5px;background:#fff;border:0.6px solid #8a8a8a;z-index:16"></div>
<svg class="a" style="left:722.7px;top:103.80px;z-index:17" width="5" height="5"><path d="M1 2.5 L2.1 3.7 L4.1 1.2" stroke="#444" stroke-width=".7" fill="none"/></svg>
<div class="t" style="left:729.4px;top:103.80px;font-size:5.0px;color:#222;transform:scaleX(0.84);transform-origin:0 50%;z-index:16">Log File Output</div>
<div class="a" style="left:722.7px;top:110.25px;width:5px;height:5px;background:#fff;border:0.6px solid #8a8a8a;z-index:16"></div>
<div class="t" style="left:729.4px;top:110.25px;font-size:5.0px;color:#222;transform:scaleX(0.84);transform-origin:0 50%;z-index:16">Input scale</div>
<div class="a" style="left:722.7px;top:115.80px;width:5px;height:5px;background:#fff;border:0.6px solid #8a8a8a;z-index:16"></div>
<div class="t" style="left:729.4px;top:115.80px;font-size:5.0px;color:#222;transform:scaleX(0.84);transform-origin:0 50%;z-index:16">Output scale</div>
<div class="a" style="left:722.7px;top:121.90px;width:5px;height:5px;background:#fff;border:0.6px solid #8a8a8a;z-index:16"></div>
<svg class="a" style="left:722.7px;top:121.90px;z-index:17" width="5" height="5"><path d="M1 2.5 L2.1 3.7 L4.1 1.2" stroke="#444" stroke-width=".7" fill="none"/></svg>
<div class="t" style="left:729.4px;top:121.90px;font-size:5.0px;color:#222;transform:scaleX(0.84);transform-origin:0 50%;z-index:16">Draw lines/curves</div>
<div class="a" style="left:722.7px;top:127.75px;width:5px;height:5px;background:#fff;border:0.6px solid #8a8a8a;z-index:16"></div>
<svg class="a" style="left:722.7px;top:127.75px;z-index:17" width="5" height="5"><path d="M1 2.5 L2.1 3.7 L4.1 1.2" stroke="#444" stroke-width=".7" fill="none"/></svg>
<div class="t" style="left:729.4px;top:127.75px;font-size:5.0px;color:#222;transform:scaleX(0.84);transform-origin:0 50%;z-index:16">Draw distances</div>
<div class="a" style="left:722.7px;top:133.80px;width:5px;height:5px;background:#fff;border:0.6px solid #8a8a8a;z-index:16"></div>
<svg class="a" style="left:722.7px;top:133.80px;z-index:17" width="5" height="5"><path d="M1 2.5 L2.1 3.7 L4.1 1.2" stroke="#444" stroke-width=".7" fill="none"/></svg>
<div class="t" style="left:729.4px;top:133.80px;font-size:5.0px;color:#222;transform:scaleX(0.84);transform-origin:0 50%;z-index:16">Draw bearings</div>
<div class="t" style="left:723px;top:141.20px;font-size:5.0px;color:#222;transform:scaleX(0.86);transform-origin:0 50%;z-index:16">Next pt:</div>
<div class="a" style="left:739.9px;top:140px;width:24.5px;height:7.4px;background:#fff;border:0.5px solid #c0c0c0;z-index:16"></div>
<div class="t" style="left:741px;top:141.30px;font-size:5.0px;color:#222;transform:scaleX(0.86);transform-origin:0 50%;z-index:16">1</div>
<div class="t" style="left:724px;top:149.10px;font-size:5.0px;color:#222;transform:scaleX(0.86);transform-origin:0 50%;z-index:16">Low pt:</div>
<div class="a" style="left:739.9px;top:148px;width:24.5px;height:7.4px;background:#f4f4f4;border:0.5px solid #c0c0c0;z-index:16"></div>
<div class="t" style="left:741px;top:149.30px;font-size:5.0px;color:#222;transform:scaleX(0.86);transform-origin:0 50%;z-index:16">140</div>
<div class="a" style="left:727px;top:157.5px;width:32.2px;height:5.8px;background:#e1e1e1;border:0.5px solid #c8c8c8;z-index:16"></div>
<div class="t" style="left:727px;width:32.2px;text-align:center;top:157.7px;font-size:5px;color:#222;transform:scaleX(.86);z-index:17">Refresh</div>
<svg class="a" style="left:128px;top:393px" width="640" height="8" viewBox="128 393 640 8" font-family="Liberation Sans">
<rect x="128" y="393" width="640" height="8" fill="#f0f0f0"/>
<rect x="129" y="394" width="6" height="6.4" fill="#e6e6e6" stroke="#c8c8c8" stroke-width=".4"/>
<rect x="135" y="394" width="6" height="6.4" fill="#e6e6e6" stroke="#c8c8c8" stroke-width=".4"/>
<rect x="141.5" y="394" width="6" height="6.4" fill="#e6e6e6" stroke="#c8c8c8" stroke-width=".4"/>
<rect x="148" y="394" width="6" height="6.4" fill="#e6e6e6" stroke="#c8c8c8" stroke-width=".4"/>
<rect x="154.5" y="394" width="6" height="6.4" fill="#e6e6e6" stroke="#c8c8c8" stroke-width=".4"/>
<path d="M130.6 395.5 v3.5 M134 395.5 L131.5 397.2 L134 399Z" fill="#222" stroke="#222" stroke-width=".5"/>
<path d="M139.5 395.5 L137 397.2 L139.5 399Z" fill="#222"/>
<path d="M143.5 395.5 L146 397.2 L143.5 399Z" fill="#222"/>
<path d="M150 395.5 L152.5 397.2 L150 399Z M153 395.5 v3.5" fill="#222" stroke="#222" stroke-width=".5"/>
<path d="M155.7 397.2 h3.8 M157.6 395.3 v3.8" stroke="#222" stroke-width=".9"/>
<path d="M162 394 L164.5 400.5 M179.5 400.5 L182 394 M203.5 400.5 L206 394" stroke="#555" stroke-width=".5"/>
<path d="M164.5 400.5 L179.5 400.5 L182 394 L162 394Z" fill="#fff"/>
<text x="165.5" y="399.3" font-size="5.2" font-weight="bold" fill="#111" textLength="13.5" lengthAdjust="spacingAndGlyphs">Model</text>
<text x="185.5" y="399.3" font-size="5.2" fill="#444" textLength="15" lengthAdjust="spacingAndGlyphs">Layout1</text>
</svg>
<div class="a" style="left:0;top:403px;width:8.5px;height:52.5px;background:#c6c6c6"></div>
<svg class="a" style="left:2px;top:404px" width="6" height="14"><path d="M.8 .8 L3.8 3.8 M3.8 .8 L.8 3.8" stroke="#333" stroke-width=".7"/><path d="M.6 9 L4 9 L2.3 11Z" fill="#222"/></svg>
<div class="t" style="left:9.3px;top:405.10px;font-family:'Liberation Mono',monospace;font-size:5.3px;color:#1e1e1e;white-space:pre">1 found</div>
<div class="t" style="left:9.3px;top:410.72px;font-family:'Liberation Mono',monospace;font-size:5.3px;color:#1e1e1e;white-space:pre">Command:</div>
<div class="t" style="left:9.3px;top:416.34px;font-family:'Liberation Mono',monospace;font-size:5.3px;color:#1e1e1e;white-space:pre">Cancel</div>
<div class="t" style="left:9.3px;top:421.96px;font-family:'Liberation Mono',monospace;font-size:5.3px;color:#1e1e1e;white-space:pre">Command:</div>
<div class="t" style="left:9.3px;top:427.58px;font-family:'Liberation Mono',monospace;font-size:5.3px;color:#1e1e1e;white-space:pre">Cancel</div>
<div class="t" style="left:9.3px;top:433.20px;font-family:'Liberation Mono',monospace;font-size:5.3px;color:#1e1e1e;white-space:pre">Command: REA</div>
<div class="t" style="left:9.3px;top:438.82px;font-family:'Liberation Mono',monospace;font-size:5.3px;color:#1e1e1e;white-space:pre">Command: _cnf_edit_bearings</div>
<div class="a" style="left:8.5px;top:446.7px;width:752.5px;height:0.6px;background:#cacaca"></div>
<div class="t" style="left:9.3px;top:450.30px;font-family:'Liberation Mono',monospace;font-size:4.65px;color:#222;white-space:pre">Command: _cnf_edit_bearings</div>
<div class="a" style="left:761px;top:403px;width:7px;height:44px;background:#f0f0f0"></div>
<svg class="a" style="left:761px;top:403px" width="7" height="44"><path d="M1.8 5.5 L3.5 3.8 L5.2 5.5" stroke="#444" stroke-width=".6" fill="none"/><rect x="1.3" y="30.5" width="4.4" height="6.7" fill="#c2c2c2"/><path d="M1.8 39.5 L3.5 41.2 L5.2 39.5" stroke="#444" stroke-width=".6" fill="none"/></svg>
<svg class="a" style="left:0;top:455px" width="768" height="12" viewBox="0 455 768 12" font-family="Liberation Sans">
<defs><linearGradient id="sbg" x1="0" y1="0" x2="0" y2="1"><stop offset="0" stop-color="#3e444e"/><stop offset=".4" stop-color="#3a3f47"/><stop offset=".6" stop-color="#2f3033"/><stop offset="1" stop-color="#2b2b2c"/></linearGradient></defs><rect x="0" y="455" width="768" height="12" fill="url(#sbg)"/>
<line x1="428" y1="456" x2="428" y2="467" stroke="#5a5d62" stroke-width=".6"/>
<text x="432.5" y="462.8" font-size="4.6" fill="#e0e0e0" textLength="53.5" lengthAdjust="spacingAndGlyphs">4403.652,10300.709,0.000</text>
<rect x="497" y="457" width="8" height="8" fill="#dadada"/><path d="M498 464 L504 458" stroke="#c03040" stroke-width=".8"/><path d="M498 464 L504 460 L504 464Z" fill="#5a8ad0" opacity=".7"/>
<path d="M510 461 h7 M513.5 459 v4" stroke="#e03030" stroke-width=".8"/>
<path d="M523.5 463.5 L526 460.5 L528.5 463.5 M526 457.5 V460.5" stroke="#eee" stroke-width=".9" fill="none"/>
<text x="533" y="462.6" font-size="4.2" fill="#ddd">1:1</text>
<rect x="541" y="457" width="9" height="9" fill="#9ea3ab"/><path d="M543 463.5 L545.5 460.5 L548 463.5 M545.5 458 V460.5" stroke="#fff" stroke-width=".9" fill="none"/><circle cx="548" cy="459.5" r="1" fill="#f0d020"/>
<path d="M554.5 463.5 L557 460.5 L559.5 463.5 M557 457.5 V460.5" stroke="#eee" stroke-width=".9" fill="none"/><circle cx="559.5" cy="459" r=".8" fill="#f0d020"/>
<rect x="567" y="458.0" width=".9" height=".9" fill="#ddd"/>
<rect x="567" y="460.3" width=".9" height=".9" fill="#ddd"/>
<rect x="567" y="462.6" width=".9" height=".9" fill="#e04040"/>
<rect x="569" y="458.0" width=".9" height=".9" fill="#ddd"/>
<rect x="569" y="460.3" width=".9" height=".9" fill="#ddd"/>
<rect x="569" y="462.6" width=".9" height=".9" fill="#ddd"/>
<rect x="571" y="458.0" width=".9" height=".9" fill="#ddd"/>
<rect x="571" y="460.3" width=".9" height=".9" fill="#ddd"/>
<rect x="571" y="462.6" width=".9" height=".9" fill="#ddd"/>
<path d="M577.5 459 h7 M577.5 463 h7 M579.5 457 v8 M582.5 457 v8" stroke="#ddd" stroke-width=".6"/>
<rect x="589" y="457" width="9" height="9" fill="#a0a4aa"/><rect x="590.5" y="459" width="3" height="1" fill="#333"/><rect x="590.5" y="461.5" width="6" height="1.5" fill="#333"/>
<path d="M603 458 V464 H608" stroke="#2a9a2a" stroke-width=".8" fill="none"/><path d="M604 463 L607 459" stroke="#e04040" stroke-width=".6"/>
<circle cx="617" cy="461" r="2.5" fill="none" stroke="#ddd" stroke-width=".9"/><circle cx="617" cy="461" r="1" fill="#e03030"/>
<rect x="625" y="457" width="9" height="9" fill="#a8a8a8"/><rect x="626.5" y="458.5" width="6" height="6" fill="#c8c8c8" stroke="#888" stroke-width=".3"/><circle cx="626.5" cy="458" r="1" fill="#e03030"/>
<path d="M638 464 H645 M638 464 L644 458" stroke="#ddd" stroke-width=".7" fill="none"/>
<path d="M650 458.5 h6 M650 460.5 h6 M650 462.5 h6 M650 464.5 h4" stroke="#eee" stroke-width=".9"/>
<text x="659.5" y="462.8" font-size="4.6" fill="#e8e8e8" textLength="16.5" lengthAdjust="spacingAndGlyphs">MODEL</text>
<text x="678" y="462.8" font-size="4.6" fill="#7a7d82" textLength="15" lengthAdjust="spacingAndGlyphs">TABLET</text>
<circle cx="703.5" cy="461" r="3.3" fill="#1a6ad8"/><circle cx="703.5" cy="461" r="1.2" fill="#3b3e43"/>
<circle cx="715.5" cy="459.3" r="1.4" fill="none" stroke="#ddd" stroke-width=".7"/><path d="M714 464.5 L715.5 461 L717 464.5" stroke="#ddd" stroke-width=".7" fill="none"/>
<rect x="722" y="458" width="7.5" height="5.5" fill="#d8dde8"/><rect x="723" y="459.5" width="5.5" height="3" fill="#2a5aa8"/>
<rect x="732.5" y="457" width="6" height="4.5" fill="#2a5aa8"/><rect x="735" y="460" width="6" height="5" fill="#d8dde8" stroke="#2a5aa8" stroke-width=".5"/>
<rect x="744.5" y="456.5" width="9" height="9.5" fill="#a8abb0"/><circle cx="749" cy="461.2" r="2.8" fill="#dfe6f0" stroke="#6a7a90" stroke-width=".4"/>
<circle cx="760.5" cy="461" r="3.3" fill="#3aa03a"/><path d="M758.8 461 L760.2 462.5 L762.3 459.6" stroke="#fff" stroke-width=".7" fill="none"/>
</svg>
</body></html>
